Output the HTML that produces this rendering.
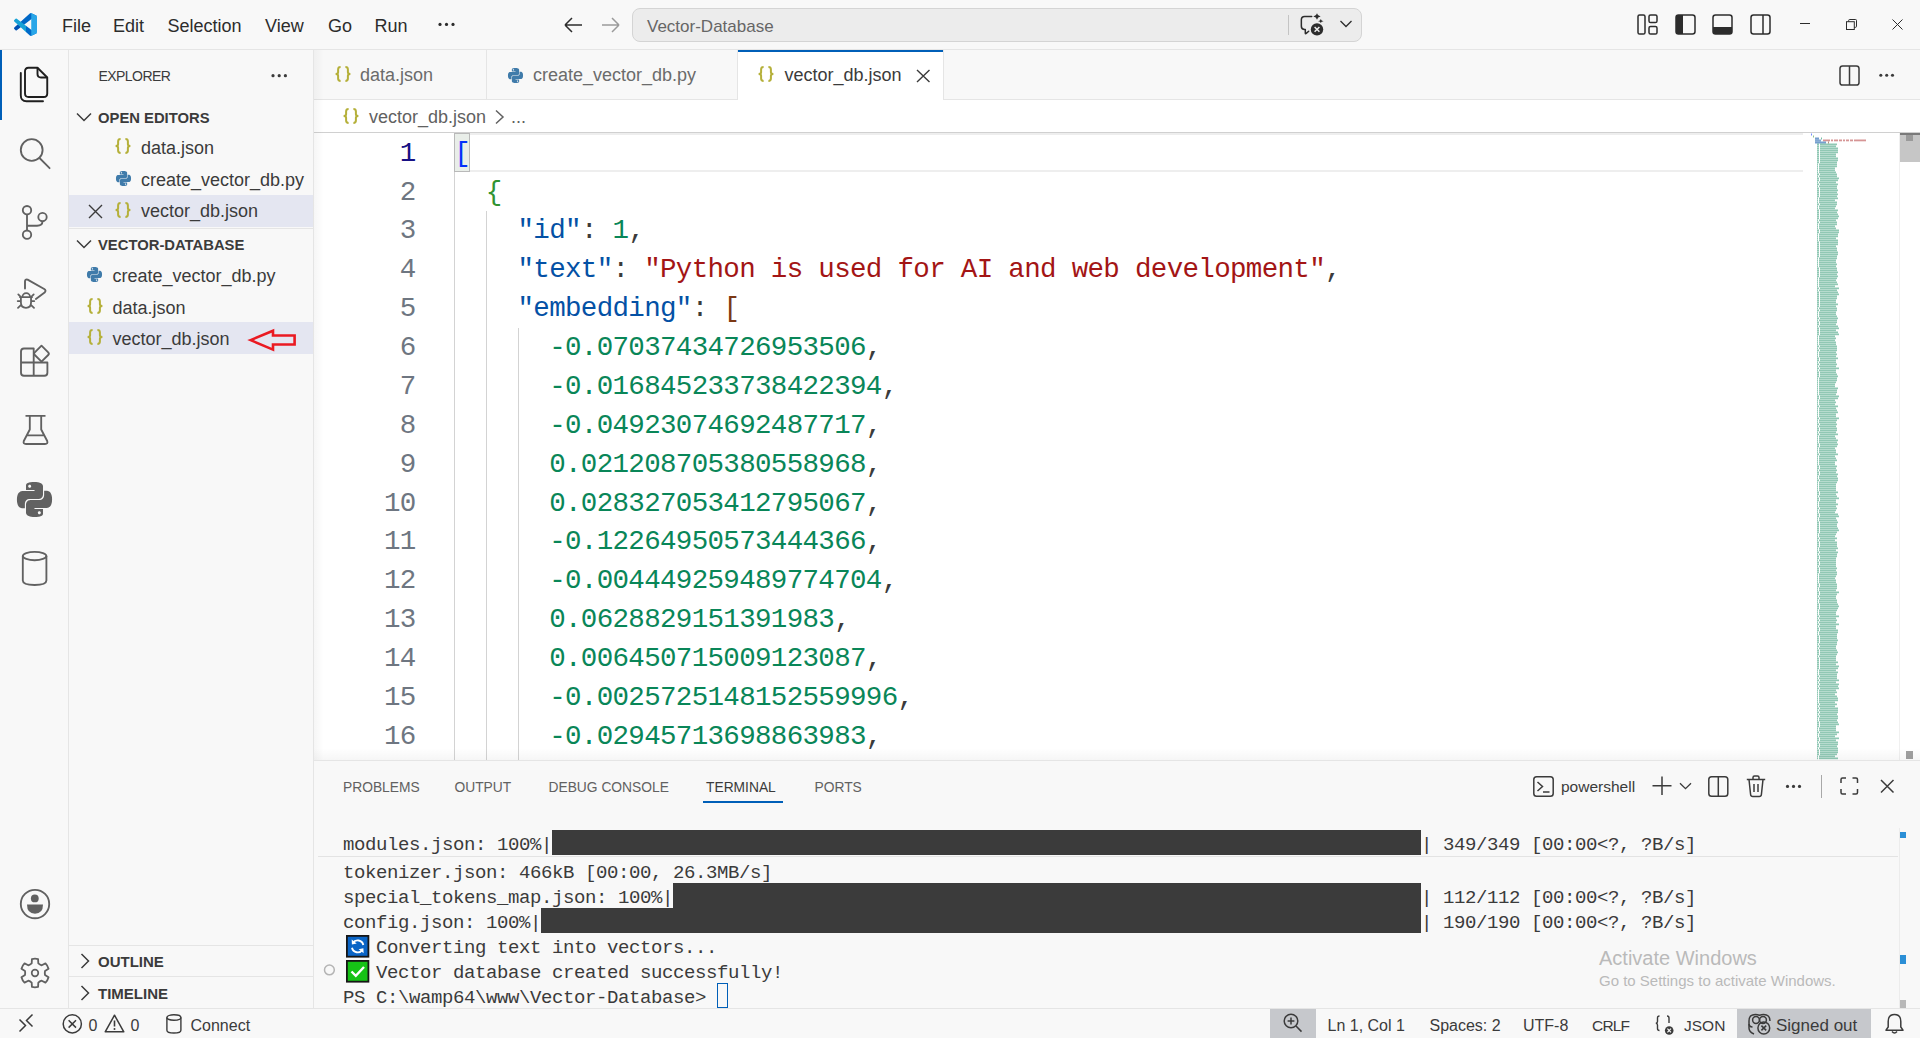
<!DOCTYPE html>
<html><head><meta charset="utf-8"><title>vector_db.json - Vector-Database - Visual Studio Code</title>
<style>
html,body{margin:0;padding:0;width:1920px;height:1038px;overflow:hidden;background:#f8f8f8;}
.r{position:absolute;}
.s{position:absolute;overflow:visible;}
.t{position:absolute;line-height:40px;height:40px;white-space:pre;font-family:"Liberation Sans",sans-serif;}
</style></head><body>
<div class="r" style="left:0px;top:0px;width:1920px;height:49px;background:#f8f8f8;"></div>
<div class="r" style="left:0px;top:49px;width:1920px;height:1px;background:#e5e5e5;"></div>
<div class="r" style="left:0px;top:50px;width:68px;height:958px;background:#f8f8f8;"></div>
<div class="r" style="left:68px;top:50px;width:1px;height:958px;background:#e5e5e5;"></div>
<div class="r" style="left:69px;top:50px;width:244px;height:958px;background:#f8f8f8;"></div>
<div class="r" style="left:313px;top:50px;width:1px;height:958px;background:#e5e5e5;"></div>
<div class="r" style="left:314px;top:50px;width:1606px;height:49px;background:#f8f8f8;"></div>
<div class="r" style="left:314px;top:99px;width:1606px;height:1px;background:#e5e5e5;"></div>
<div class="r" style="left:314px;top:100px;width:1606px;height:660px;background:#ffffff;"></div>
<div class="r" style="left:314px;top:760px;width:1606px;height:1px;background:#e5e5e5;"></div>
<div class="r" style="left:314px;top:761px;width:1606px;height:247px;background:#f8f8f8;"></div>
<div class="r" style="left:0px;top:1008px;width:1920px;height:1px;background:#e5e5e5;"></div>
<div class="r" style="left:0px;top:1009px;width:1920px;height:29px;background:#f8f8f8;"></div>
<svg class="s" style="left:14px;top:13px;" width="23" height="23" viewBox="0 0 100 100"><defs><linearGradient id="lg1" x1="0" y1="0" x2="100" y2="0" gradientUnits="userSpaceOnUse"><stop offset="0" stop-color="#0052b4"/><stop offset="0.3" stop-color="#0052b4"/><stop offset="0.31" stop-color="#0068c6"/><stop offset="1" stop-color="#0068c6"/></linearGradient><linearGradient id="lg2" x1="0" y1="0" x2="100" y2="0" gradientUnits="userSpaceOnUse"><stop offset="0" stop-color="#17a2d6"/><stop offset="0.5" stop-color="#17a2d6"/><stop offset="0.52" stop-color="#006ac8"/><stop offset="1" stop-color="#006ac8"/></linearGradient></defs><path fill="url(#lg1)" d="M96.46 10.8 75.86.87a6.23 6.23 0 0 0-7.1 1.2L1.33 63.58a4.16 4.16 0 0 0 0 6.16l5.52 5a4.16 4.16 0 0 0 5.31.24L93.4 13.42a4.13 4.13 0 0 1 6.6 3.3v-.24a6.25 6.25 0 0 0-3.54-5.63z"/><path fill="url(#lg2)" d="m96.46 89.2-20.6 9.93a6.23 6.23 0 0 1-7.1-1.2L1.33 36.42a4.16 4.16 0 0 1 0-6.16l5.52-5a4.16 4.16 0 0 1 5.310-.24l81.24 61.56a4.13 4.13 0 0 0 6.6-3.3v.24a6.25 6.25 0 0 1-3.54 5.63z"/><path fill="#29a6e8" d="M75.86 99.13a6.24 6.24 0 0 1-7.1-1.2c2.3 2.3 6.24.67 6.24-2.59V4.66c0-3.26-3.94-4.890-6.24-2.59a6.24 6.24 0 0 1 7.1-1.2l20.6 9.91A6.25 6.25 0 0 1 100 16.45v67.1a6.25 6.25 0 0 1-3.54 5.63z"/></svg>
<div class="t" style="left:62px;top:5.76px;font-size:18px;color:#2c2c2c;font-family:'Liberation Sans', sans-serif;">File</div>
<div class="t" style="left:113px;top:5.76px;font-size:18px;color:#2c2c2c;font-family:'Liberation Sans', sans-serif;">Edit</div>
<div class="t" style="left:167.5px;top:5.76px;font-size:18px;color:#2c2c2c;font-family:'Liberation Sans', sans-serif;">Selection</div>
<div class="t" style="left:265px;top:5.76px;font-size:18px;color:#2c2c2c;font-family:'Liberation Sans', sans-serif;">View</div>
<div class="t" style="left:328px;top:5.76px;font-size:18px;color:#2c2c2c;font-family:'Liberation Sans', sans-serif;">Go</div>
<div class="t" style="left:374.5px;top:5.76px;font-size:18px;color:#2c2c2c;font-family:'Liberation Sans', sans-serif;">Run</div>
<svg class="s" style="left:437px;top:20px;" width="20" height="8" viewBox="0 0 20 8"><circle cx="3" cy="4.4" r="1.6" fill="#2c2c2c"/><circle cx="9.5" cy="4.4" r="1.6" fill="#2c2c2c"/><circle cx="16" cy="4.4" r="1.6" fill="#2c2c2c"/></svg>
<svg class="s" style="left:562px;top:15px;" width="22" height="20" viewBox="0 0 22 20"><path d="M3 10 H20 M3 10 L10 3 M3 10 L10 17" stroke="#2c2c2c" stroke-width="1.5" fill="none"/></svg>
<svg class="s" style="left:600px;top:15px;" width="22" height="20" viewBox="0 0 22 20"><path d="M19 10 H2 M19 10 L12 3 M19 10 L12 17" stroke="#9a9a9a" stroke-width="1.5" fill="none"/></svg>
<div class="r" style="left:632px;top:8px;width:730px;height:34px;background:#ececec;border:1px solid #d4d4d4;box-sizing:border-box;border-radius:8px;"></div>
<div class="t" style="left:647px;top:7.11px;font-size:17px;color:#666666;font-family:'Liberation Sans', sans-serif;">Vector-Database</div>
<div class="r" style="left:1288px;top:15px;width:1px;height:20px;background:#c4c4c4;"></div>
<svg class="s" style="left:1296px;top:10px;" width="32" height="30" viewBox="0 0 32 30"><path d="M15.7 6.5 H8.6 Q5.35 6.5 5.35 9.8 V16.2 Q5.35 19.4 8.6 19.4 H9.3 V23.3 Q9.5 24 10.2 23.4 L12.7 21.2" stroke="#2c2c2c" stroke-width="1.5" fill="none" stroke-linejoin="round" stroke-linecap="round"/><path d="M21 3.2 Q21.6 5.9 24.6 6.5 Q21.6 7.1 21 9.7 Q20.4 7.1 17.3 6.5 Q20.4 5.9 21 3.2Z" fill="#2c2c2c"/><path d="M24.8 9.1 Q25.2 10.9 27.6 11.2 Q25.2 11.6 24.8 12.9 Q24.4 11.6 22.1 11.2 Q24.4 10.9 24.8 9.1Z" fill="#2c2c2c"/><circle cx="21" cy="19.4" r="6.2" fill="#2c2c2c"/><path d="M18.6 17 L23.4 21.8 M23.4 17 L18.6 21.8" stroke="#ececec" stroke-width="1.5"/></svg>
<svg class="s" style="left:1339px;top:19px;" width="14" height="10" viewBox="0 0 14 10"><path d="M1.5 2 L7 7.5 L12.5 2" stroke="#2c2c2c" stroke-width="1.3" fill="none"/></svg>
<svg class="s" style="left:1637px;top:14px;" width="22" height="21" viewBox="0 0 22 21"><rect x="1" y="1" width="7" height="19" rx="1.6" stroke="#2c2c2c" stroke-width="1.5" fill="none"/><rect x="12" y="1" width="8" height="7.5" rx="1.6" stroke="#2c2c2c" stroke-width="1.5" fill="none"/><rect x="12" y="12.5" width="8" height="7.5" rx="1.6" stroke="#2c2c2c" stroke-width="1.5" fill="none"/></svg>
<svg class="s" style="left:1675px;top:14px;" width="21" height="21" viewBox="0 0 21 21"><rect x="1" y="1" width="19" height="19" rx="2.5" stroke="#2c2c2c" stroke-width="1.5" fill="none"/><path d="M3.5 1 H8 V20 H3.5 Q1 20 1 17.5 V3.5 Q1 1 3.5 1Z" fill="#2c2c2c"/></svg>
<svg class="s" style="left:1712px;top:14px;" width="21" height="21" viewBox="0 0 21 21"><rect x="1" y="1" width="19" height="19" rx="2.5" stroke="#2c2c2c" stroke-width="1.5" fill="none"/><path d="M1 13 H20 V17.5 Q20 20 17.5 20 H3.5 Q1 20 1 17.5Z" fill="#2c2c2c"/></svg>
<svg class="s" style="left:1750px;top:14px;" width="21" height="21" viewBox="0 0 21 21"><rect x="1" y="1" width="19" height="19" rx="2.5" stroke="#2c2c2c" stroke-width="1.5" fill="none"/><path d="M13 1 V20" stroke="#2c2c2c" stroke-width="1.5"/></svg>
<div class="r" style="left:1800px;top:23px;width:10px;height:1px;background:#2c2c2c;"></div>
<svg class="s" style="left:1846px;top:19px;" width="11" height="11" viewBox="0 0 11 11"><rect x="0.5" y="2.7" width="7.8" height="7.8" stroke="#2c2c2c" stroke-width="1" fill="none"/><path d="M2.7 2.7 V1.4 Q2.7 0.5 3.6 0.5 H9.6 Q10.5 0.5 10.5 1.4 V7.4 Q10.5 8.3 9.6 8.3 H8.3" stroke="#2c2c2c" stroke-width="1" fill="none"/></svg>
<svg class="s" style="left:1891.5px;top:19px;" width="11" height="11" viewBox="0 0 11 11"><path d="M0.5 0.5 L10.5 10.5 M10.5 0.5 L0.5 10.5" stroke="#2c2c2c" stroke-width="1"/></svg>
<div class="r" style="left:0px;top:50px;width:2px;height:70px;background:#005fb8;"></div>
<svg class="s" style="left:20px;top:67px;" width="29" height="36" viewBox="0 0 29 36"><path d="M8.5 0.75 H17.5 L27.25 10.5 V26.5 Q27.25 30 23.75 30 H8.5 Q5 30 5 26.5 V4.25 Q5 0.75 8.5 0.75Z" stroke="#1f1f1f" stroke-width="1.9" fill="none" stroke-linejoin="round"/><path d="M17.5 0.75 V7 Q17.5 10.5 21 10.5 H27.25" stroke="#1f1f1f" stroke-width="1.9" fill="none"/><path d="M0.8 6 V28.5 Q0.8 34.2 6.5 34.2 H23" stroke="#1f1f1f" stroke-width="1.9" fill="none" stroke-linecap="round"/></svg>
<svg class="s" style="left:19px;top:137px;" width="33" height="33" viewBox="0 0 33 33"><circle cx="12.7" cy="13" r="10.9" stroke="#616161" stroke-width="1.85" fill="none"/><path d="M20.5 21 L30.6 31.2" stroke="#616161" stroke-width="1.8" stroke-linecap="round"/></svg>
<svg class="s" style="left:19px;top:204px;" width="32" height="37" viewBox="0 0 32 37"><circle cx="8" cy="6.2" r="4.2" stroke="#616161" stroke-width="1.85" fill="none"/><circle cx="8" cy="30.7" r="4.2" stroke="#616161" stroke-width="1.85" fill="none"/><circle cx="23.5" cy="13" r="4.2" stroke="#616161" stroke-width="1.85" fill="none"/><path d="M8 10.4 V26.5 M8 21.7 H18 Q23.5 21.7 23.5 17.2" stroke="#616161" stroke-width="1.85" fill="none"/></svg>
<svg class="s" style="left:10px;top:272px;" width="46" height="42" viewBox="0 0 46 42"><path d="M15 16.6 V9.6 Q15 7 17.6 7.6 L34.2 17 Q36.6 18.6 34.6 20.6 L25.9 26.9" stroke="#616161" stroke-width="1.9" fill="none" stroke-linejoin="round" stroke-linecap="round"/><path d="M12.4 25 A3.85 3.85 0 0 1 20.1 25" stroke="#616161" stroke-width="1.8" fill="none"/><path d="M9.9 25.1 H22.1 M10.9 25.1 V30.5 Q10.9 35.8 16 35.8 Q21.05 35.8 21.05 30.5 V25.1 M8.3 22.4 L10.9 25.1 M23.7 22.4 L21.05 25.1 M7.7 29.1 H10.9 M24.3 29.1 H21.05 M8 35.8 L11.4 32.6 M24 35.8 L20.6 32.6" stroke="#616161" stroke-width="1.8" fill="none" stroke-linecap="round"/></svg>
<svg class="s" style="left:19.5px;top:344.5px;overflow:visible;" width="31" height="30" viewBox="0 -2.5 31 30"><path d="M4 1 H13.7 V28.2 H4 Q1 28.2 1 25.2 V4 Q1 1 4 1Z M1 15 H27.4 V25.2 Q27.4 28.2 24.4 28.2 H13.7" stroke="#616161" stroke-width="1.85" fill="none" stroke-linejoin="round"/><path d="M21.5 -1.8 L28.2 4.9 Q29.5 6.2 28.2 7.5 L21.5 14.2 L14.8 7.5 Q13.5 6.2 14.8 4.9Z" stroke="#616161" stroke-width="1.85" fill="none" stroke-linejoin="round"/></svg>
<svg class="s" style="left:22.5px;top:414.5px;overflow:visible;" width="26" height="31" viewBox="0 0 26 31"><path d="M2.5 0.8 H22.5 M6.8 0.8 V14.5 L0.8 26 Q-0.2 29 3 29 H22 Q25.2 29 24.2 26 L18.2 14.5 V0.8 M3.6 20.3 H21.4" stroke="#616161" stroke-width="1.85" fill="none" stroke-linejoin="round"/></svg>
<svg class="s" style="left:17px;top:482px;" width="35" height="35" viewBox="0 0 24 24"><path d="M14.25.18l.9.2.73.26.59.3.45.32.34.34.25.34.16.33.1.3.04.26.02.2-.01.13V8.5l-.05.63-.13.55-.21.46-.26.38-.3.31-.33.25-.35.19-.35.14-.33.1-.3.07-.26.04-.21.02H8.77l-.69.05-.59.14-.5.22-.41.27-.33.32-.27.35-.2.36-.15.37-.1.35-.07.32-.04.27-.02.21v3.06H3.17l-.21-.03-.28-.07-.32-.12-.35-.18-.36-.26-.36-.36-.35-.46-.32-.59-.28-.73-.21-.88-.14-1.05-.05-1.23.06-1.22.16-1.04.24-.87.32-.71.36-.57.4-.44.42-.33.42-.24.4-.16.36-.1.32-.05.24-.01h.16l.06.01h8.16v-.83H6.18l-.01-2.75-.02-.37.05-.34.11-.31.17-.28.25-.26.31-.23.38-.2.44-.18.51-.15.58-.12.64-.1.71-.06.77-.04.84-.02 1.27.05zm-6.3 1.98l-.23.33-.08.41.08.41.23.34.33.22.41.09.41-.09.33-.22.23-.34.08-.41-.08-.41-.23-.33-.33-.22-.41-.09-.41.09zm13.09 3.95l.28.06.32.12.35.18.36.27.36.35.35.47.32.59.28.73.21.88.14 1.04.05 1.23-.06 1.23-.16 1.04-.24.86-.32.71-.36.57-.4.45-.42.33-.42.24-.4.16-.36.09-.32.05-.24.02-.16-.01h-8.22v.82h5.84l.01 2.76.02.36-.05.34-.11.31-.17.29-.25.25-.31.24-.38.2-.44.17-.51.15-.58.13-.64.09-.71.07-.77.04-.84.01-1.27-.04-1.07-.14-.9-.2-.73-.25-.59-.3-.45-.33-.34-.34-.25-.34-.16-.33-.1-.3-.04-.25-.02-.2.01-.13v-5.34l.05-.64.13-.54.21-.46.26-.38.3-.32.33-.24.35-.2.35-.14.33-.1.3-.06.26-.04.21-.02.13-.01h5.84l.69-.05.59-.14.5-.21.41-.28.33-.32.27-.35.2-.36.15-.36.1-.35.07-.32.04-.28.02-.21V6.07h2.09l.14.01zm-6.47 14.25l-.23.33-.08.41.08.41.23.33.33.23.41.08.41-.08.33-.23.23-.33.08-.41-.08-.41-.23-.33-.33-.23-.41-.08-.41.08z" fill="#616161"/></svg>
<svg class="s" style="left:22px;top:551px;" width="26" height="36" viewBox="0 0 26 36"><ellipse cx="12.6" cy="5" rx="11.8" ry="4.2" stroke="#616161" stroke-width="1.85" fill="none"/><path d="M0.8 5 V29.5 Q0.8 34 12.6 34 Q24.4 34 24.4 29.5 V5" stroke="#616161" stroke-width="1.85" fill="none"/></svg>
<svg class="s" style="left:20px;top:888.5px;" width="30" height="30" viewBox="0 0 30 30"><circle cx="15" cy="15" r="14.2" stroke="#616161" stroke-width="1.85" fill="none"/><circle cx="14.8" cy="9.4" r="3.9" fill="#616161"/><path d="M7 15.6 H23 Q23 24.8 15 24.8 Q7 24.8 7 15.6Z" fill="#616161"/></svg>
<svg class="s" style="left:20px;top:957.5px;" width="30" height="30" viewBox="0 0 30 30"><path d="M11.68 5.36 L11.93 1.14 Q15.00 0.30 18.07 1.14 L18.32 5.36 Q19.80 6.69 21.69 7.30 L25.47 5.41 Q27.73 7.65 28.54 10.73 L25.01 13.05 Q24.60 15.00 25.01 16.95 L28.54 19.27 Q27.73 22.35 25.47 24.59 L21.69 22.70 Q19.80 23.31 18.32 24.64 L18.07 28.86 Q15.00 29.70 11.93 28.86 L11.68 24.64 Q10.20 23.31 8.31 22.70 L4.53 24.59 Q2.27 22.35 1.46 19.27 L4.99 16.95 Q5.40 15.00 4.99 13.05 L1.46 10.73 Q2.27 7.65 4.53 5.41 L8.31 7.30 Q10.20 6.69 11.68 5.36 Z" stroke="#616161" stroke-width="1.8" fill="none" stroke-linejoin="round"/><circle cx="15" cy="15" r="3.3" stroke="#616161" stroke-width="1.7" fill="none"/></svg>
<div class="t" style="left:98.5px;top:56.45px;font-size:14px;color:#3b3b3b;font-family:'Liberation Sans', sans-serif;letter-spacing:-0.55px;">EXPLORER</div>
<svg class="s" style="left:271px;top:72px;" width="18" height="7" viewBox="0 0 18 7"><circle cx="2" cy="3.7" r="1.6" fill="#3b3b3b"/><circle cx="8.2" cy="3.7" r="1.6" fill="#3b3b3b"/><circle cx="14.4" cy="3.7" r="1.6" fill="#3b3b3b"/></svg>
<svg class="s" style="left:75.5px;top:111.5px;" width="16" height="10" viewBox="0 0 16 10"><path d="M1 1.5 L8 8.5 L15 1.5" stroke="#3b3b3b" stroke-width="1.5" fill="none"/></svg>
<div class="t" style="left:98px;top:97.67px;font-size:14.8px;color:#3b3b3b;font-weight:bold;font-family:'Liberation Sans', sans-serif;">OPEN EDITORS</div>
<svg class="s" style="left:115px;top:138.4px;" width="16" height="16" viewBox="0 0 16 16"><path d="M5.6 1 Q3.1 1 3.1 3.4 V6.2 Q3.1 8 0.6 8 Q3.1 8 3.1 9.8 V12.6 Q3.1 15 5.6 15" stroke="#b5b03a" stroke-width="2" fill="none"/><path d="M10.4 1 Q12.9 1 12.9 3.4 V6.2 Q12.9 8 15.4 8 Q12.9 8 12.9 9.8 V12.6 Q12.9 15 10.4 15" stroke="#b5b03a" stroke-width="2" fill="none"/></svg>
<div class="t" style="left:141px;top:128.26px;font-size:18px;color:#3b3b3b;font-family:'Liberation Sans', sans-serif;">data.json</div>
<svg class="s" style="left:116px;top:171px;" width="15" height="15" viewBox="0 0 24 24"><path d="M14.25.18l.9.2.73.26.59.3.45.32.34.34.25.34.16.33.1.3.04.26.02.2-.01.13V8.5l-.05.63-.13.55-.21.46-.26.38-.3.31-.33.25-.35.19-.35.14-.33.1-.3.07-.26.04-.21.02H8.77l-.69.05-.59.14-.5.22-.41.27-.33.32-.27.35-.2.36-.15.37-.1.35-.07.32-.04.27-.02.21v3.06H3.17l-.21-.03-.28-.07-.32-.12-.35-.18-.36-.26-.36-.36-.35-.46-.32-.59-.28-.73-.21-.88-.14-1.05-.05-1.23.06-1.22.16-1.04.24-.87.32-.71.36-.57.4-.44.42-.33.42-.24.4-.16.36-.1.32-.05.24-.01h.16l.06.01h8.16v-.83H6.18l-.01-2.75-.02-.37.05-.34.11-.31.17-.28.25-.26.31-.23.38-.2.44-.18.51-.15.58-.12.64-.1.71-.06.77-.04.84-.02 1.27.05zm-6.3 1.98l-.23.33-.08.41.08.41.23.34.33.22.41.09.41-.09.33-.22.23-.34.08-.41-.08-.41-.23-.33-.33-.22-.41-.09-.41.09zm13.09 3.95l.28.06.32.12.35.18.36.27.36.35.35.47.32.59.28.73.21.88.14 1.04.05 1.23-.06 1.23-.16 1.04-.24.86-.32.71-.36.57-.4.45-.42.33-.42.24-.4.16-.36.09-.32.05-.24.02-.16-.01h-8.22v.82h5.84l.01 2.76.02.36-.05.34-.11.31-.17.29-.25.25-.31.24-.38.2-.44.17-.51.15-.58.13-.64.09-.71.07-.77.04-.84.01-1.27-.04-1.07-.14-.9-.2-.73-.25-.59-.3-.45-.33-.34-.34-.25-.34-.16-.33-.1-.3-.04-.25-.02-.2.01-.13v-5.34l.05-.64.13-.54.21-.46.26-.38.3-.32.33-.24.35-.2.35-.14.33-.1.3-.06.26-.04.21-.02.13-.01h5.84l.69-.05.59-.14.5-.21.41-.28.33-.32.27-.35.2-.36.15-.36.1-.35.07-.32.04-.28.02-.21V6.07h2.09l.14.01zm-6.47 14.25l-.23.33-.08.41.08.41.23.33.33.23.41.08.41-.08.33-.23.23-.33.08-.41-.08-.41-.23-.33-.33-.23-.41-.08-.41.08z" fill="#3f7baa"/></svg>
<div class="t" style="left:141px;top:159.76px;font-size:18px;color:#3b3b3b;font-family:'Liberation Sans', sans-serif;">create_vector_db.py</div>
<div class="r" style="left:69px;top:195px;width:244px;height:32px;background:#e4e6f1;"></div>
<svg class="s" style="left:87.5px;top:203.5px;" width="15" height="15" viewBox="0 0 15 15"><path d="M1 1 L14 14 M14 1 L1 14" stroke="#3b3b3b" stroke-width="1.4"/></svg>
<svg class="s" style="left:115px;top:201.9px;" width="16" height="16" viewBox="0 0 16 16"><path d="M5.6 1 Q3.1 1 3.1 3.4 V6.2 Q3.1 8 0.6 8 Q3.1 8 3.1 9.8 V12.6 Q3.1 15 5.6 15" stroke="#b5b03a" stroke-width="2" fill="none"/><path d="M10.4 1 Q12.9 1 12.9 3.4 V6.2 Q12.9 8 15.4 8 Q12.9 8 12.9 9.8 V12.6 Q12.9 15 10.4 15" stroke="#b5b03a" stroke-width="2" fill="none"/></svg>
<div class="t" style="left:141px;top:191.06px;font-size:18px;color:#3b3b3b;font-family:'Liberation Sans', sans-serif;">vector_db.json</div>
<div class="r" style="left:69px;top:228px;width:244px;height:1px;background:#e5e5e5;"></div>
<svg class="s" style="left:75.5px;top:238.5px;" width="16" height="10" viewBox="0 0 16 10"><path d="M1 1.5 L8 8.5 L15 1.5" stroke="#3b3b3b" stroke-width="1.5" fill="none"/></svg>
<div class="t" style="left:98px;top:224.57px;font-size:14.8px;color:#3b3b3b;font-weight:bold;font-family:'Liberation Sans', sans-serif;">VECTOR-DATABASE</div>
<svg class="s" style="left:87px;top:266.5px;" width="15" height="15" viewBox="0 0 24 24"><path d="M14.25.18l.9.2.73.26.59.3.45.32.34.34.25.34.16.33.1.3.04.26.02.2-.01.13V8.5l-.05.63-.13.55-.21.46-.26.38-.3.31-.33.25-.35.19-.35.14-.33.1-.3.07-.26.04-.21.02H8.77l-.69.05-.59.14-.5.22-.41.27-.33.32-.27.35-.2.36-.15.37-.1.35-.07.32-.04.27-.02.21v3.06H3.17l-.21-.03-.28-.07-.32-.12-.35-.18-.36-.26-.36-.36-.35-.46-.32-.59-.28-.73-.21-.88-.14-1.05-.05-1.23.06-1.22.16-1.04.24-.87.32-.71.36-.57.4-.44.42-.33.42-.24.4-.16.36-.1.32-.05.24-.01h.16l.06.01h8.16v-.83H6.18l-.01-2.75-.02-.37.05-.34.11-.31.17-.28.25-.26.31-.23.38-.2.44-.18.51-.15.58-.12.64-.1.71-.06.77-.04.84-.02 1.27.05zm-6.3 1.98l-.23.33-.08.41.08.41.23.34.33.22.41.09.41-.09.33-.22.23-.34.08-.41-.08-.41-.23-.33-.33-.22-.41-.09-.41.09zm13.09 3.95l.28.06.32.12.35.18.36.27.36.35.35.47.32.59.28.73.21.88.14 1.04.05 1.23-.06 1.23-.16 1.04-.24.86-.32.71-.36.57-.4.45-.42.33-.42.24-.4.16-.36.09-.32.05-.24.02-.16-.01h-8.22v.82h5.84l.01 2.76.02.36-.05.34-.11.31-.17.29-.25.25-.31.24-.38.2-.44.17-.51.15-.58.13-.64.09-.71.07-.77.04-.84.01-1.27-.04-1.07-.14-.9-.2-.73-.25-.59-.3-.45-.33-.34-.34-.25-.34-.16-.33-.1-.3-.04-.25-.02-.2.01-.13v-5.34l.05-.64.13-.54.21-.46.26-.38.3-.32.33-.24.35-.2.35-.14.33-.1.3-.06.26-.04.21-.02.13-.01h5.84l.69-.05.59-.14.5-.21.41-.28.33-.32.27-.35.2-.36.15-.36.1-.35.07-.32.04-.28.02-.21V6.07h2.09l.14.01zm-6.47 14.25l-.23.33-.08.41.08.41.23.33.33.23.41.08.41-.08.33-.23.23-.33.08-.41-.08-.41-.23-.33-.33-.23-.41-.08-.41.08z" fill="#3f7baa"/></svg>
<div class="t" style="left:112.5px;top:255.66px;font-size:18px;color:#3b3b3b;font-family:'Liberation Sans', sans-serif;">create_vector_db.py</div>
<svg class="s" style="left:86.5px;top:297.9px;" width="16" height="16" viewBox="0 0 16 16"><path d="M5.6 1 Q3.1 1 3.1 3.4 V6.2 Q3.1 8 0.6 8 Q3.1 8 3.1 9.8 V12.6 Q3.1 15 5.6 15" stroke="#b5b03a" stroke-width="2" fill="none"/><path d="M10.4 1 Q12.9 1 12.9 3.4 V6.2 Q12.9 8 15.4 8 Q12.9 8 12.9 9.8 V12.6 Q12.9 15 10.4 15" stroke="#b5b03a" stroke-width="2" fill="none"/></svg>
<div class="t" style="left:112.5px;top:287.66px;font-size:18px;color:#3b3b3b;font-family:'Liberation Sans', sans-serif;">data.json</div>
<div class="r" style="left:69px;top:322px;width:244px;height:32px;background:#e4e6f1;"></div>
<svg class="s" style="left:86.5px;top:328.9px;" width="16" height="16" viewBox="0 0 16 16"><path d="M5.6 1 Q3.1 1 3.1 3.4 V6.2 Q3.1 8 0.6 8 Q3.1 8 3.1 9.8 V12.6 Q3.1 15 5.6 15" stroke="#b5b03a" stroke-width="2" fill="none"/><path d="M10.4 1 Q12.9 1 12.9 3.4 V6.2 Q12.9 8 15.4 8 Q12.9 8 12.9 9.8 V12.6 Q12.9 15 10.4 15" stroke="#b5b03a" stroke-width="2" fill="none"/></svg>
<div class="t" style="left:112.5px;top:318.56px;font-size:18px;color:#3b3b3b;font-family:'Liberation Sans', sans-serif;">vector_db.json</div>
<svg class="s" style="left:247px;top:327px;" width="52" height="27" viewBox="0 0 52 27"><path d="M3.6 13.1 L26 3.7 V8.5 H47.6 V17.5 H26 V22.6 Z" stroke="#ea1a22" stroke-width="2.6" fill="none" stroke-linejoin="miter"/></svg>
<div class="r" style="left:69px;top:945px;width:244px;height:1px;background:#e5e5e5;"></div>
<svg class="s" style="left:79.5px;top:953px;" width="10" height="16" viewBox="0 0 10 16"><path d="M1.5 1 L8.5 8 L1.5 15" stroke="#3b3b3b" stroke-width="1.5" fill="none"/></svg>
<div class="t" style="left:98px;top:941.90px;font-size:15px;color:#3b3b3b;font-weight:bold;font-family:'Liberation Sans', sans-serif;">OUTLINE</div>
<div class="r" style="left:69px;top:976px;width:244px;height:1px;background:#e5e5e5;"></div>
<svg class="s" style="left:79.5px;top:984.5px;" width="10" height="16" viewBox="0 0 10 16"><path d="M1.5 1 L8.5 8 L1.5 15" stroke="#3b3b3b" stroke-width="1.5" fill="none"/></svg>
<div class="t" style="left:98px;top:973.80px;font-size:15px;color:#3b3b3b;font-weight:bold;font-family:'Liberation Sans', sans-serif;">TIMELINE</div>
<div class="r" style="left:486px;top:50px;width:1px;height:49px;background:#e5e5e5;"></div>
<svg class="s" style="left:334.5px;top:66.4px;" width="16" height="16" viewBox="0 0 16 16"><path d="M5.6 1 Q3.1 1 3.1 3.4 V6.2 Q3.1 8 0.6 8 Q3.1 8 3.1 9.8 V12.6 Q3.1 15 5.6 15" stroke="#b5b03a" stroke-width="2" fill="none"/><path d="M10.4 1 Q12.9 1 12.9 3.4 V6.2 Q12.9 8 15.4 8 Q12.9 8 12.9 9.8 V12.6 Q12.9 15 10.4 15" stroke="#b5b03a" stroke-width="2" fill="none"/></svg>
<div class="t" style="left:360px;top:55.46px;font-size:18px;color:#6b6b6b;font-family:'Liberation Sans', sans-serif;">data.json</div>
<svg class="s" style="left:507.5px;top:67.5px;" width="15" height="15" viewBox="0 0 24 24"><path d="M14.25.18l.9.2.73.26.59.3.45.32.34.34.25.34.16.33.1.3.04.26.02.2-.01.13V8.5l-.05.63-.13.55-.21.46-.26.38-.3.31-.33.25-.35.19-.35.14-.33.1-.3.07-.26.04-.21.02H8.77l-.69.05-.59.14-.5.22-.41.27-.33.32-.27.35-.2.36-.15.37-.1.35-.07.32-.04.27-.02.21v3.06H3.17l-.21-.03-.28-.07-.32-.12-.35-.18-.36-.26-.36-.36-.35-.46-.32-.59-.28-.73-.21-.88-.14-1.05-.05-1.23.06-1.22.16-1.04.24-.87.32-.71.36-.57.4-.44.42-.33.42-.24.4-.16.36-.1.32-.05.24-.01h.16l.06.01h8.16v-.83H6.18l-.01-2.75-.02-.37.05-.34.11-.31.17-.28.25-.26.31-.23.38-.2.44-.18.51-.15.58-.12.64-.1.71-.06.77-.04.84-.02 1.27.05zm-6.3 1.98l-.23.33-.08.41.08.41.23.34.33.22.41.09.41-.09.33-.22.23-.34.08-.41-.08-.41-.23-.33-.33-.22-.41-.09-.41.09zm13.09 3.95l.28.06.32.12.35.18.36.27.36.35.35.47.32.59.28.73.21.88.14 1.04.05 1.23-.06 1.23-.16 1.04-.24.86-.32.71-.36.57-.4.45-.42.33-.42.24-.4.16-.36.09-.32.05-.24.02-.16-.01h-8.22v.82h5.84l.01 2.76.02.36-.05.34-.11.31-.17.29-.25.25-.31.24-.38.2-.44.17-.51.15-.58.13-.64.09-.71.07-.77.04-.84.01-1.27-.04-1.07-.14-.9-.2-.73-.25-.59-.3-.45-.33-.34-.34-.25-.34-.16-.33-.1-.3-.04-.25-.02-.2.01-.13v-5.34l.05-.64.13-.54.21-.46.26-.38.3-.32.33-.24.35-.2.35-.14.33-.1.3-.06.26-.04.21-.02.13-.01h5.84l.69-.05.59-.14.5-.21.41-.28.33-.32.27-.35.2-.36.15-.36.1-.35.07-.32.04-.28.02-.21V6.07h2.09l.14.01zm-6.47 14.25l-.23.33-.08.41.08.41.23.33.33.23.41.08.41-.08.33-.23.23-.33.08-.41-.08-.41-.23-.33-.33-.23-.41-.08-.41.08z" fill="#3f7baa"/></svg>
<div class="t" style="left:533px;top:55.46px;font-size:18px;color:#6b6b6b;font-family:'Liberation Sans', sans-serif;">create_vector_db.py</div>
<div class="r" style="left:737px;top:50px;width:1px;height:50px;background:#e5e5e5;"></div>
<div class="r" style="left:738px;top:50px;width:205px;height:50px;background:#ffffff;"></div>
<div class="r" style="left:738px;top:50px;width:205px;height:2px;background:#005fb8;"></div>
<div class="r" style="left:943px;top:50px;width:1px;height:49px;background:#e5e5e5;"></div>
<svg class="s" style="left:758px;top:66.4px;" width="16" height="16" viewBox="0 0 16 16"><path d="M5.6 1 Q3.1 1 3.1 3.4 V6.2 Q3.1 8 0.6 8 Q3.1 8 3.1 9.8 V12.6 Q3.1 15 5.6 15" stroke="#b5b03a" stroke-width="2" fill="none"/><path d="M10.4 1 Q12.9 1 12.9 3.4 V6.2 Q12.9 8 15.4 8 Q12.9 8 12.9 9.8 V12.6 Q12.9 15 10.4 15" stroke="#b5b03a" stroke-width="2" fill="none"/></svg>
<div class="t" style="left:784.5px;top:55.46px;font-size:18px;color:#3b3b3b;font-family:'Liberation Sans', sans-serif;">vector_db.json</div>
<svg class="s" style="left:916px;top:68.5px;" width="14.5" height="14" viewBox="0 0 14.5 14"><path d="M1 1 L13.5 13 M13.5 1 L1 13" stroke="#3b3b3b" stroke-width="1.4"/></svg>
<svg class="s" style="left:1838.6px;top:65px;" width="21" height="21" viewBox="0 0 21 21"><rect x="1" y="1" width="19" height="19" rx="2.6" stroke="#3b3b3b" stroke-width="1.5" fill="none"/><path d="M10.5 1 V20" stroke="#3b3b3b" stroke-width="1.5"/></svg>
<svg class="s" style="left:1877px;top:72px;" width="18" height="7" viewBox="0 0 18 7"><circle cx="3.8" cy="3.3" r="1.55" fill="#3b3b3b"/><circle cx="9.7" cy="3.3" r="1.55" fill="#3b3b3b"/><circle cx="15.5" cy="3.3" r="1.55" fill="#3b3b3b"/></svg>
<svg class="s" style="left:343px;top:108.4px;" width="16" height="16" viewBox="0 0 16 16"><path d="M5.6 1 Q3.1 1 3.1 3.4 V6.2 Q3.1 8 0.6 8 Q3.1 8 3.1 9.8 V12.6 Q3.1 15 5.6 15" stroke="#b5b03a" stroke-width="2" fill="none"/><path d="M10.4 1 Q12.9 1 12.9 3.4 V6.2 Q12.9 8 15.4 8 Q12.9 8 12.9 9.8 V12.6 Q12.9 15 10.4 15" stroke="#b5b03a" stroke-width="2" fill="none"/></svg>
<div class="t" style="left:369px;top:97.06px;font-size:18px;color:#616161;font-family:'Liberation Sans', sans-serif;">vector_db.json</div>
<svg class="s" style="left:494px;top:109px;" width="12" height="16" viewBox="0 0 12 16"><path d="M2 1.5 L9 8 L2 14.5" stroke="#616161" stroke-width="1.5" fill="none"/></svg>
<div class="t" style="left:511px;top:97.06px;font-size:18px;color:#616161;font-family:'Liberation Sans', sans-serif;">...</div>
<div class="r" style="left:314px;top:132px;width:1606px;height:1px;background:#d0d0d0;"></div>
<div class="r" style="left:455px;top:133px;width:1348px;height:2px;background:#eeeeee;"></div>
<div class="r" style="left:455px;top:170px;width:1348px;height:2px;background:#eeeeee;"></div>
<div class="r" style="left:454px;top:133px;width:16px;height:38.5px;background:#e9eee9;border:1px solid #b9b9b9;box-sizing:border-box;"></div>
<div class="r" style="left:454px;top:172px;width:1px;height:588px;background:#d3d3d3;"></div>
<div class="r" style="left:486px;top:211px;width:1px;height:549px;background:#d3d3d3;"></div>
<div class="r" style="left:518px;top:328px;width:1px;height:432px;background:#d3d3d3;"></div>
<div class="t" style="left:316px;width:99.6px;text-align:right;top:133.67px;font-size:27.5px;color:#171184;font-family:'Liberation Mono',monospace;letter-spacing:-0.670px">1</div>
<div class="t" style="left:454.2px;top:133.67px;font-size:27.5px;font-family:'Liberation Mono',monospace;letter-spacing:-0.670px;white-space:pre"><span style="color:#0431fa">[</span></div>
<div class="t" style="left:316px;width:99.6px;text-align:right;top:172.55px;font-size:27.5px;color:#6e7681;font-family:'Liberation Mono',monospace;letter-spacing:-0.670px">2</div>
<div class="t" style="left:454.2px;top:172.55px;font-size:27.5px;font-family:'Liberation Mono',monospace;letter-spacing:-0.670px;white-space:pre">  <span style="color:#319331">{</span></div>
<div class="t" style="left:316px;width:99.6px;text-align:right;top:211.43px;font-size:27.5px;color:#6e7681;font-family:'Liberation Mono',monospace;letter-spacing:-0.670px">3</div>
<div class="t" style="left:454.2px;top:211.43px;font-size:27.5px;font-family:'Liberation Mono',monospace;letter-spacing:-0.670px;white-space:pre">    <span style="color:#0451a5">"id"</span><span style="color:#3b3b3b">: </span><span style="color:#098658">1</span><span style="color:#3b3b3b">,</span></div>
<div class="t" style="left:316px;width:99.6px;text-align:right;top:250.31px;font-size:27.5px;color:#6e7681;font-family:'Liberation Mono',monospace;letter-spacing:-0.670px">4</div>
<div class="t" style="left:454.2px;top:250.31px;font-size:27.5px;font-family:'Liberation Mono',monospace;letter-spacing:-0.670px;white-space:pre">    <span style="color:#0451a5">"text"</span><span style="color:#3b3b3b">: </span><span style="color:#a31515">"Python is used for AI and web development"</span><span style="color:#3b3b3b">,</span></div>
<div class="t" style="left:316px;width:99.6px;text-align:right;top:289.19px;font-size:27.5px;color:#6e7681;font-family:'Liberation Mono',monospace;letter-spacing:-0.670px">5</div>
<div class="t" style="left:454.2px;top:289.19px;font-size:27.5px;font-family:'Liberation Mono',monospace;letter-spacing:-0.670px;white-space:pre">    <span style="color:#0451a5">"embedding"</span><span style="color:#3b3b3b">: </span><span style="color:#7b3814">[</span></div>
<div class="t" style="left:316px;width:99.6px;text-align:right;top:328.07px;font-size:27.5px;color:#6e7681;font-family:'Liberation Mono',monospace;letter-spacing:-0.670px">6</div>
<div class="t" style="left:454.2px;top:328.07px;font-size:27.5px;font-family:'Liberation Mono',monospace;letter-spacing:-0.670px;white-space:pre">      <span style="color:#098658">-0.07037434726953506</span><span style="color:#3b3b3b">,</span></div>
<div class="t" style="left:316px;width:99.6px;text-align:right;top:366.95px;font-size:27.5px;color:#6e7681;font-family:'Liberation Mono',monospace;letter-spacing:-0.670px">7</div>
<div class="t" style="left:454.2px;top:366.95px;font-size:27.5px;font-family:'Liberation Mono',monospace;letter-spacing:-0.670px;white-space:pre">      <span style="color:#098658">-0.016845233738422394</span><span style="color:#3b3b3b">,</span></div>
<div class="t" style="left:316px;width:99.6px;text-align:right;top:405.83px;font-size:27.5px;color:#6e7681;font-family:'Liberation Mono',monospace;letter-spacing:-0.670px">8</div>
<div class="t" style="left:454.2px;top:405.83px;font-size:27.5px;font-family:'Liberation Mono',monospace;letter-spacing:-0.670px;white-space:pre">      <span style="color:#098658">-0.04923074692487717</span><span style="color:#3b3b3b">,</span></div>
<div class="t" style="left:316px;width:99.6px;text-align:right;top:444.71px;font-size:27.5px;color:#6e7681;font-family:'Liberation Mono',monospace;letter-spacing:-0.670px">9</div>
<div class="t" style="left:454.2px;top:444.71px;font-size:27.5px;font-family:'Liberation Mono',monospace;letter-spacing:-0.670px;white-space:pre">      <span style="color:#098658">0.021208705380558968</span><span style="color:#3b3b3b">,</span></div>
<div class="t" style="left:316px;width:99.6px;text-align:right;top:483.59px;font-size:27.5px;color:#6e7681;font-family:'Liberation Mono',monospace;letter-spacing:-0.670px">10</div>
<div class="t" style="left:454.2px;top:483.59px;font-size:27.5px;font-family:'Liberation Mono',monospace;letter-spacing:-0.670px;white-space:pre">      <span style="color:#098658">0.028327053412795067</span><span style="color:#3b3b3b">,</span></div>
<div class="t" style="left:316px;width:99.6px;text-align:right;top:522.47px;font-size:27.5px;color:#6e7681;font-family:'Liberation Mono',monospace;letter-spacing:-0.670px">11</div>
<div class="t" style="left:454.2px;top:522.47px;font-size:27.5px;font-family:'Liberation Mono',monospace;letter-spacing:-0.670px;white-space:pre">      <span style="color:#098658">-0.12264950573444366</span><span style="color:#3b3b3b">,</span></div>
<div class="t" style="left:316px;width:99.6px;text-align:right;top:561.35px;font-size:27.5px;color:#6e7681;font-family:'Liberation Mono',monospace;letter-spacing:-0.670px">12</div>
<div class="t" style="left:454.2px;top:561.35px;font-size:27.5px;font-family:'Liberation Mono',monospace;letter-spacing:-0.670px;white-space:pre">      <span style="color:#098658">-0.004449259489774704</span><span style="color:#3b3b3b">,</span></div>
<div class="t" style="left:316px;width:99.6px;text-align:right;top:600.23px;font-size:27.5px;color:#6e7681;font-family:'Liberation Mono',monospace;letter-spacing:-0.670px">13</div>
<div class="t" style="left:454.2px;top:600.23px;font-size:27.5px;font-family:'Liberation Mono',monospace;letter-spacing:-0.670px;white-space:pre">      <span style="color:#098658">0.0628829151391983</span><span style="color:#3b3b3b">,</span></div>
<div class="t" style="left:316px;width:99.6px;text-align:right;top:639.11px;font-size:27.5px;color:#6e7681;font-family:'Liberation Mono',monospace;letter-spacing:-0.670px">14</div>
<div class="t" style="left:454.2px;top:639.11px;font-size:27.5px;font-family:'Liberation Mono',monospace;letter-spacing:-0.670px;white-space:pre">      <span style="color:#098658">0.006450715009123087</span><span style="color:#3b3b3b">,</span></div>
<div class="t" style="left:316px;width:99.6px;text-align:right;top:677.99px;font-size:27.5px;color:#6e7681;font-family:'Liberation Mono',monospace;letter-spacing:-0.670px">15</div>
<div class="t" style="left:454.2px;top:677.99px;font-size:27.5px;font-family:'Liberation Mono',monospace;letter-spacing:-0.670px;white-space:pre">      <span style="color:#098658">-0.0025725148152559996</span><span style="color:#3b3b3b">,</span></div>
<div class="t" style="left:316px;width:99.6px;text-align:right;top:716.87px;font-size:27.5px;color:#6e7681;font-family:'Liberation Mono',monospace;letter-spacing:-0.670px">16</div>
<div class="t" style="left:454.2px;top:716.87px;font-size:27.5px;font-family:'Liberation Mono',monospace;letter-spacing:-0.670px;white-space:pre">      <span style="color:#098658">-0.02945713698863983</span><span style="color:#3b3b3b">,</span></div>
<svg class="s" style="left:1811px;top:133px;" width="88" height="627" viewBox="0 0 88 627"><rect x="0" y="0.5" width="1" height="2" fill="#0431fa" opacity="0.55"/><rect x="2" y="2.5" width="1" height="2" fill="#319331" opacity="0.55"/><rect x="4" y="4.5" width="4" height="2" fill="#0451a5" opacity="0.55"/><rect x="10" y="4.5" width="1" height="2" fill="#098658" opacity="0.55"/><rect x="4" y="6.5" width="6" height="2" fill="#0451a5" opacity="0.5"/><rect x="12" y="6.5" width="7" height="1.8" fill="#a31515" opacity="0.45"/><rect x="20" y="6.5" width="2" height="1.8" fill="#a31515" opacity="0.45"/><rect x="23" y="6.5" width="4" height="1.8" fill="#a31515" opacity="0.45"/><rect x="28" y="6.5" width="3" height="1.8" fill="#a31515" opacity="0.45"/><rect x="32" y="6.5" width="2" height="1.8" fill="#a31515" opacity="0.45"/><rect x="35" y="6.5" width="3" height="1.8" fill="#a31515" opacity="0.45"/><rect x="39" y="6.5" width="3" height="1.8" fill="#a31515" opacity="0.45"/><rect x="43" y="6.5" width="12" height="1.8" fill="#a31515" opacity="0.45"/><rect x="4" y="8.5" width="11" height="2" fill="#0451a5" opacity="0.55"/><rect x="17" y="8.5" width="1" height="2" fill="#7b3814" opacity="0.55"/><rect x="6" y="10.5" width="2" height="1.7" fill="#098658" opacity="0.45"/><rect x="9" y="10.5" width="17" height="1.7" fill="#098658" opacity="0.45"/><rect x="6" y="12.5" width="2" height="1.7" fill="#098658" opacity="0.45"/><rect x="9" y="12.5" width="16" height="1.7" fill="#098658" opacity="0.45"/><rect x="6" y="14.5" width="2" height="1.7" fill="#098658" opacity="0.45"/><rect x="9" y="14.5" width="18" height="1.7" fill="#098658" opacity="0.45"/><rect x="6" y="16.5" width="2" height="1.7" fill="#098658" opacity="0.45"/><rect x="9" y="16.5" width="18" height="1.7" fill="#098658" opacity="0.45"/><rect x="6" y="18.5" width="2" height="1.7" fill="#098658" opacity="0.45"/><rect x="9" y="18.5" width="18" height="1.7" fill="#098658" opacity="0.45"/><rect x="6" y="20.5" width="2" height="1.7" fill="#098658" opacity="0.45"/><rect x="9" y="20.5" width="16" height="1.7" fill="#098658" opacity="0.45"/><rect x="6" y="22.5" width="2" height="1.7" fill="#098658" opacity="0.45"/><rect x="9" y="22.5" width="16" height="1.7" fill="#098658" opacity="0.45"/><rect x="6" y="24.5" width="2" height="1.7" fill="#098658" opacity="0.45"/><rect x="9" y="24.5" width="18" height="1.7" fill="#098658" opacity="0.45"/><rect x="6" y="26.5" width="2" height="1.7" fill="#098658" opacity="0.45"/><rect x="9" y="26.5" width="18" height="1.7" fill="#098658" opacity="0.45"/><rect x="6" y="28.5" width="2" height="1.7" fill="#098658" opacity="0.45"/><rect x="9" y="28.5" width="17" height="1.7" fill="#098658" opacity="0.45"/><rect x="6" y="30.5" width="1" height="1.7" fill="#098658" opacity="0.45"/><rect x="8" y="30.5" width="18" height="1.7" fill="#098658" opacity="0.45"/><rect x="6" y="32.5" width="1" height="1.7" fill="#098658" opacity="0.45"/><rect x="8" y="32.5" width="18" height="1.7" fill="#098658" opacity="0.45"/><rect x="6" y="34.5" width="1" height="1.7" fill="#098658" opacity="0.45"/><rect x="8" y="34.5" width="16" height="1.7" fill="#098658" opacity="0.45"/><rect x="6" y="36.5" width="1" height="1.7" fill="#098658" opacity="0.45"/><rect x="8" y="36.5" width="16" height="1.7" fill="#098658" opacity="0.45"/><rect x="6" y="38.5" width="1" height="1.7" fill="#098658" opacity="0.45"/><rect x="8" y="38.5" width="17" height="1.7" fill="#098658" opacity="0.45"/><rect x="6" y="40.5" width="2" height="1.7" fill="#098658" opacity="0.45"/><rect x="9" y="40.5" width="17" height="1.7" fill="#098658" opacity="0.45"/><rect x="6" y="42.5" width="1" height="1.7" fill="#098658" opacity="0.45"/><rect x="8" y="42.5" width="18" height="1.7" fill="#098658" opacity="0.45"/><rect x="6" y="44.5" width="2" height="1.7" fill="#098658" opacity="0.45"/><rect x="9" y="44.5" width="19" height="1.7" fill="#098658" opacity="0.45"/><rect x="6" y="46.5" width="2" height="1.7" fill="#098658" opacity="0.45"/><rect x="9" y="46.5" width="18" height="1.7" fill="#098658" opacity="0.45"/><rect x="6" y="48.5" width="1" height="1.7" fill="#098658" opacity="0.45"/><rect x="8" y="48.5" width="17" height="1.7" fill="#098658" opacity="0.45"/><rect x="6" y="50.5" width="2" height="1.7" fill="#098658" opacity="0.45"/><rect x="9" y="50.5" width="18" height="1.7" fill="#098658" opacity="0.45"/><rect x="6" y="52.5" width="1" height="1.7" fill="#098658" opacity="0.45"/><rect x="8" y="52.5" width="18" height="1.7" fill="#098658" opacity="0.45"/><rect x="6" y="54.5" width="2" height="1.7" fill="#098658" opacity="0.45"/><rect x="9" y="54.5" width="17" height="1.7" fill="#098658" opacity="0.45"/><rect x="6" y="56.5" width="2" height="1.7" fill="#098658" opacity="0.45"/><rect x="9" y="56.5" width="18" height="1.7" fill="#098658" opacity="0.45"/><rect x="6" y="58.5" width="2" height="1.7" fill="#098658" opacity="0.45"/><rect x="9" y="58.5" width="17" height="1.7" fill="#098658" opacity="0.45"/><rect x="6" y="60.5" width="2" height="1.7" fill="#098658" opacity="0.45"/><rect x="9" y="60.5" width="18" height="1.7" fill="#098658" opacity="0.45"/><rect x="6" y="62.5" width="2" height="1.7" fill="#098658" opacity="0.45"/><rect x="9" y="62.5" width="17" height="1.7" fill="#098658" opacity="0.45"/><rect x="6" y="64.5" width="1" height="1.7" fill="#098658" opacity="0.45"/><rect x="8" y="64.5" width="19" height="1.7" fill="#098658" opacity="0.45"/><rect x="6" y="66.5" width="1" height="1.7" fill="#098658" opacity="0.45"/><rect x="8" y="66.5" width="16" height="1.7" fill="#098658" opacity="0.45"/><rect x="6" y="68.5" width="1" height="1.7" fill="#098658" opacity="0.45"/><rect x="8" y="68.5" width="18" height="1.7" fill="#098658" opacity="0.45"/><rect x="6" y="70.5" width="2" height="1.7" fill="#098658" opacity="0.45"/><rect x="9" y="70.5" width="17" height="1.7" fill="#098658" opacity="0.45"/><rect x="6" y="72.5" width="1" height="1.7" fill="#098658" opacity="0.45"/><rect x="8" y="72.5" width="17" height="1.7" fill="#098658" opacity="0.45"/><rect x="6" y="74.5" width="1" height="1.7" fill="#098658" opacity="0.45"/><rect x="8" y="74.5" width="16" height="1.7" fill="#098658" opacity="0.45"/><rect x="6" y="76.5" width="2" height="1.7" fill="#098658" opacity="0.45"/><rect x="9" y="76.5" width="18" height="1.7" fill="#098658" opacity="0.45"/><rect x="6" y="78.5" width="2" height="1.7" fill="#098658" opacity="0.45"/><rect x="9" y="78.5" width="17" height="1.7" fill="#098658" opacity="0.45"/><rect x="6" y="80.5" width="2" height="1.7" fill="#098658" opacity="0.45"/><rect x="9" y="80.5" width="18" height="1.7" fill="#098658" opacity="0.45"/><rect x="6" y="82.5" width="2" height="1.7" fill="#098658" opacity="0.45"/><rect x="9" y="82.5" width="19" height="1.7" fill="#098658" opacity="0.45"/><rect x="6" y="84.5" width="2" height="1.7" fill="#098658" opacity="0.45"/><rect x="9" y="84.5" width="18" height="1.7" fill="#098658" opacity="0.45"/><rect x="6" y="86.5" width="1" height="1.7" fill="#098658" opacity="0.45"/><rect x="8" y="86.5" width="17" height="1.7" fill="#098658" opacity="0.45"/><rect x="6" y="88.5" width="2" height="1.7" fill="#098658" opacity="0.45"/><rect x="9" y="88.5" width="17" height="1.7" fill="#098658" opacity="0.45"/><rect x="6" y="90.5" width="1" height="1.7" fill="#098658" opacity="0.45"/><rect x="8" y="90.5" width="18" height="1.7" fill="#098658" opacity="0.45"/><rect x="6" y="92.5" width="1" height="1.7" fill="#098658" opacity="0.45"/><rect x="8" y="92.5" width="16" height="1.7" fill="#098658" opacity="0.45"/><rect x="6" y="94.5" width="1" height="1.7" fill="#098658" opacity="0.45"/><rect x="8" y="94.5" width="17" height="1.7" fill="#098658" opacity="0.45"/><rect x="6" y="96.5" width="2" height="1.7" fill="#098658" opacity="0.45"/><rect x="9" y="96.5" width="19" height="1.7" fill="#098658" opacity="0.45"/><rect x="6" y="98.5" width="2" height="1.7" fill="#098658" opacity="0.45"/><rect x="9" y="98.5" width="19" height="1.7" fill="#098658" opacity="0.45"/><rect x="6" y="100.5" width="1" height="1.7" fill="#098658" opacity="0.45"/><rect x="8" y="100.5" width="19" height="1.7" fill="#098658" opacity="0.45"/><rect x="6" y="102.5" width="1" height="1.7" fill="#098658" opacity="0.45"/><rect x="8" y="102.5" width="19" height="1.7" fill="#098658" opacity="0.45"/><rect x="6" y="104.5" width="1" height="1.7" fill="#098658" opacity="0.45"/><rect x="8" y="104.5" width="17" height="1.7" fill="#098658" opacity="0.45"/><rect x="6" y="106.5" width="1" height="1.7" fill="#098658" opacity="0.45"/><rect x="8" y="106.5" width="19" height="1.7" fill="#098658" opacity="0.45"/><rect x="6" y="108.5" width="2" height="1.7" fill="#098658" opacity="0.45"/><rect x="9" y="108.5" width="18" height="1.7" fill="#098658" opacity="0.45"/><rect x="6" y="110.5" width="2" height="1.7" fill="#098658" opacity="0.45"/><rect x="9" y="110.5" width="18" height="1.7" fill="#098658" opacity="0.45"/><rect x="6" y="112.5" width="2" height="1.7" fill="#098658" opacity="0.45"/><rect x="9" y="112.5" width="16" height="1.7" fill="#098658" opacity="0.45"/><rect x="6" y="114.5" width="2" height="1.7" fill="#098658" opacity="0.45"/><rect x="9" y="114.5" width="17" height="1.7" fill="#098658" opacity="0.45"/><rect x="6" y="116.5" width="2" height="1.7" fill="#098658" opacity="0.45"/><rect x="9" y="116.5" width="17" height="1.7" fill="#098658" opacity="0.45"/><rect x="6" y="118.5" width="2" height="1.7" fill="#098658" opacity="0.45"/><rect x="9" y="118.5" width="18" height="1.7" fill="#098658" opacity="0.45"/><rect x="6" y="120.5" width="2" height="1.7" fill="#098658" opacity="0.45"/><rect x="9" y="120.5" width="18" height="1.7" fill="#098658" opacity="0.45"/><rect x="6" y="122.5" width="2" height="1.7" fill="#098658" opacity="0.45"/><rect x="9" y="122.5" width="17" height="1.7" fill="#098658" opacity="0.45"/><rect x="6" y="124.5" width="1" height="1.7" fill="#098658" opacity="0.45"/><rect x="8" y="124.5" width="18" height="1.7" fill="#098658" opacity="0.45"/><rect x="6" y="126.5" width="1" height="1.7" fill="#098658" opacity="0.45"/><rect x="8" y="126.5" width="17" height="1.7" fill="#098658" opacity="0.45"/><rect x="6" y="128.5" width="1" height="1.7" fill="#098658" opacity="0.45"/><rect x="8" y="128.5" width="17" height="1.7" fill="#098658" opacity="0.45"/><rect x="6" y="130.5" width="1" height="1.7" fill="#098658" opacity="0.45"/><rect x="8" y="130.5" width="18" height="1.7" fill="#098658" opacity="0.45"/><rect x="6" y="132.5" width="1" height="1.7" fill="#098658" opacity="0.45"/><rect x="8" y="132.5" width="17" height="1.7" fill="#098658" opacity="0.45"/><rect x="6" y="134.5" width="2" height="1.7" fill="#098658" opacity="0.45"/><rect x="9" y="134.5" width="17" height="1.7" fill="#098658" opacity="0.45"/><rect x="6" y="136.5" width="2" height="1.7" fill="#098658" opacity="0.45"/><rect x="9" y="136.5" width="17" height="1.7" fill="#098658" opacity="0.45"/><rect x="6" y="138.5" width="2" height="1.7" fill="#098658" opacity="0.45"/><rect x="9" y="138.5" width="18" height="1.7" fill="#098658" opacity="0.45"/><rect x="6" y="140.5" width="2" height="1.7" fill="#098658" opacity="0.45"/><rect x="9" y="140.5" width="17" height="1.7" fill="#098658" opacity="0.45"/><rect x="6" y="142.5" width="2" height="1.7" fill="#098658" opacity="0.45"/><rect x="9" y="142.5" width="18" height="1.7" fill="#098658" opacity="0.45"/><rect x="6" y="144.5" width="1" height="1.7" fill="#098658" opacity="0.45"/><rect x="8" y="144.5" width="18" height="1.7" fill="#098658" opacity="0.45"/><rect x="6" y="146.5" width="1" height="1.7" fill="#098658" opacity="0.45"/><rect x="8" y="146.5" width="17" height="1.7" fill="#098658" opacity="0.45"/><rect x="6" y="148.5" width="1" height="1.7" fill="#098658" opacity="0.45"/><rect x="8" y="148.5" width="18" height="1.7" fill="#098658" opacity="0.45"/><rect x="6" y="150.5" width="1" height="1.7" fill="#098658" opacity="0.45"/><rect x="8" y="150.5" width="19" height="1.7" fill="#098658" opacity="0.45"/><rect x="6" y="152.5" width="1" height="1.7" fill="#098658" opacity="0.45"/><rect x="8" y="152.5" width="16" height="1.7" fill="#098658" opacity="0.45"/><rect x="6" y="154.5" width="2" height="1.7" fill="#098658" opacity="0.45"/><rect x="9" y="154.5" width="19" height="1.7" fill="#098658" opacity="0.45"/><rect x="6" y="156.5" width="1" height="1.7" fill="#098658" opacity="0.45"/><rect x="8" y="156.5" width="18" height="1.7" fill="#098658" opacity="0.45"/><rect x="6" y="158.5" width="2" height="1.7" fill="#098658" opacity="0.45"/><rect x="9" y="158.5" width="18" height="1.7" fill="#098658" opacity="0.45"/><rect x="6" y="160.5" width="2" height="1.7" fill="#098658" opacity="0.45"/><rect x="9" y="160.5" width="19" height="1.7" fill="#098658" opacity="0.45"/><rect x="6" y="162.5" width="2" height="1.7" fill="#098658" opacity="0.45"/><rect x="9" y="162.5" width="17" height="1.7" fill="#098658" opacity="0.45"/><rect x="6" y="164.5" width="2" height="1.7" fill="#098658" opacity="0.45"/><rect x="9" y="164.5" width="17" height="1.7" fill="#098658" opacity="0.45"/><rect x="6" y="166.5" width="2" height="1.7" fill="#098658" opacity="0.45"/><rect x="9" y="166.5" width="16" height="1.7" fill="#098658" opacity="0.45"/><rect x="6" y="168.5" width="2" height="1.7" fill="#098658" opacity="0.45"/><rect x="9" y="168.5" width="16" height="1.7" fill="#098658" opacity="0.45"/><rect x="6" y="170.5" width="2" height="1.7" fill="#098658" opacity="0.45"/><rect x="9" y="170.5" width="18" height="1.7" fill="#098658" opacity="0.45"/><rect x="6" y="172.5" width="2" height="1.7" fill="#098658" opacity="0.45"/><rect x="9" y="172.5" width="16" height="1.7" fill="#098658" opacity="0.45"/><rect x="6" y="174.5" width="1" height="1.7" fill="#098658" opacity="0.45"/><rect x="8" y="174.5" width="18" height="1.7" fill="#098658" opacity="0.45"/><rect x="6" y="176.5" width="2" height="1.7" fill="#098658" opacity="0.45"/><rect x="9" y="176.5" width="17" height="1.7" fill="#098658" opacity="0.45"/><rect x="6" y="178.5" width="1" height="1.7" fill="#098658" opacity="0.45"/><rect x="8" y="178.5" width="17" height="1.7" fill="#098658" opacity="0.45"/><rect x="6" y="180.5" width="1" height="1.7" fill="#098658" opacity="0.45"/><rect x="8" y="180.5" width="17" height="1.7" fill="#098658" opacity="0.45"/><rect x="6" y="182.5" width="1" height="1.7" fill="#098658" opacity="0.45"/><rect x="8" y="182.5" width="18" height="1.7" fill="#098658" opacity="0.45"/><rect x="6" y="184.5" width="2" height="1.7" fill="#098658" opacity="0.45"/><rect x="9" y="184.5" width="18" height="1.7" fill="#098658" opacity="0.45"/><rect x="6" y="186.5" width="1" height="1.7" fill="#098658" opacity="0.45"/><rect x="8" y="186.5" width="18" height="1.7" fill="#098658" opacity="0.45"/><rect x="6" y="188.5" width="2" height="1.7" fill="#098658" opacity="0.45"/><rect x="9" y="188.5" width="17" height="1.7" fill="#098658" opacity="0.45"/><rect x="6" y="190.5" width="2" height="1.7" fill="#098658" opacity="0.45"/><rect x="9" y="190.5" width="16" height="1.7" fill="#098658" opacity="0.45"/><rect x="6" y="192.5" width="1" height="1.7" fill="#098658" opacity="0.45"/><rect x="8" y="192.5" width="19" height="1.7" fill="#098658" opacity="0.45"/><rect x="6" y="194.5" width="2" height="1.7" fill="#098658" opacity="0.45"/><rect x="9" y="194.5" width="19" height="1.7" fill="#098658" opacity="0.45"/><rect x="6" y="196.5" width="2" height="1.7" fill="#098658" opacity="0.45"/><rect x="9" y="196.5" width="16" height="1.7" fill="#098658" opacity="0.45"/><rect x="6" y="198.5" width="2" height="1.7" fill="#098658" opacity="0.45"/><rect x="9" y="198.5" width="18" height="1.7" fill="#098658" opacity="0.45"/><rect x="6" y="200.5" width="2" height="1.7" fill="#098658" opacity="0.45"/><rect x="9" y="200.5" width="19" height="1.7" fill="#098658" opacity="0.45"/><rect x="6" y="202.5" width="1" height="1.7" fill="#098658" opacity="0.45"/><rect x="8" y="202.5" width="16" height="1.7" fill="#098658" opacity="0.45"/><rect x="6" y="204.5" width="1" height="1.7" fill="#098658" opacity="0.45"/><rect x="8" y="204.5" width="17" height="1.7" fill="#098658" opacity="0.45"/><rect x="6" y="206.5" width="1" height="1.7" fill="#098658" opacity="0.45"/><rect x="8" y="206.5" width="16" height="1.7" fill="#098658" opacity="0.45"/><rect x="6" y="208.5" width="1" height="1.7" fill="#098658" opacity="0.45"/><rect x="8" y="208.5" width="17" height="1.7" fill="#098658" opacity="0.45"/><rect x="6" y="210.5" width="1" height="1.7" fill="#098658" opacity="0.45"/><rect x="8" y="210.5" width="17" height="1.7" fill="#098658" opacity="0.45"/><rect x="6" y="212.5" width="2" height="1.7" fill="#098658" opacity="0.45"/><rect x="9" y="212.5" width="17" height="1.7" fill="#098658" opacity="0.45"/><rect x="6" y="214.5" width="1" height="1.7" fill="#098658" opacity="0.45"/><rect x="8" y="214.5" width="18" height="1.7" fill="#098658" opacity="0.45"/><rect x="6" y="216.5" width="2" height="1.7" fill="#098658" opacity="0.45"/><rect x="9" y="216.5" width="17" height="1.7" fill="#098658" opacity="0.45"/><rect x="6" y="218.5" width="1" height="1.7" fill="#098658" opacity="0.45"/><rect x="8" y="218.5" width="17" height="1.7" fill="#098658" opacity="0.45"/><rect x="6" y="220.5" width="1" height="1.7" fill="#098658" opacity="0.45"/><rect x="8" y="220.5" width="18" height="1.7" fill="#098658" opacity="0.45"/><rect x="6" y="222.5" width="1" height="1.7" fill="#098658" opacity="0.45"/><rect x="8" y="222.5" width="17" height="1.7" fill="#098658" opacity="0.45"/><rect x="6" y="224.5" width="2" height="1.7" fill="#098658" opacity="0.45"/><rect x="9" y="224.5" width="18" height="1.7" fill="#098658" opacity="0.45"/><rect x="6" y="226.5" width="2" height="1.7" fill="#098658" opacity="0.45"/><rect x="9" y="226.5" width="16" height="1.7" fill="#098658" opacity="0.45"/><rect x="6" y="228.5" width="1" height="1.7" fill="#098658" opacity="0.45"/><rect x="8" y="228.5" width="17" height="1.7" fill="#098658" opacity="0.45"/><rect x="6" y="230.5" width="2" height="1.7" fill="#098658" opacity="0.45"/><rect x="9" y="230.5" width="17" height="1.7" fill="#098658" opacity="0.45"/><rect x="6" y="232.5" width="1" height="1.7" fill="#098658" opacity="0.45"/><rect x="8" y="232.5" width="17" height="1.7" fill="#098658" opacity="0.45"/><rect x="6" y="234.5" width="2" height="1.7" fill="#098658" opacity="0.45"/><rect x="9" y="234.5" width="19" height="1.7" fill="#098658" opacity="0.45"/><rect x="6" y="236.5" width="1" height="1.7" fill="#098658" opacity="0.45"/><rect x="8" y="236.5" width="17" height="1.7" fill="#098658" opacity="0.45"/><rect x="6" y="238.5" width="2" height="1.7" fill="#098658" opacity="0.45"/><rect x="9" y="238.5" width="16" height="1.7" fill="#098658" opacity="0.45"/><rect x="6" y="240.5" width="2" height="1.7" fill="#098658" opacity="0.45"/><rect x="9" y="240.5" width="17" height="1.7" fill="#098658" opacity="0.45"/><rect x="6" y="242.5" width="2" height="1.7" fill="#098658" opacity="0.45"/><rect x="9" y="242.5" width="18" height="1.7" fill="#098658" opacity="0.45"/><rect x="6" y="244.5" width="1" height="1.7" fill="#098658" opacity="0.45"/><rect x="8" y="244.5" width="18" height="1.7" fill="#098658" opacity="0.45"/><rect x="6" y="246.5" width="1" height="1.7" fill="#098658" opacity="0.45"/><rect x="8" y="246.5" width="18" height="1.7" fill="#098658" opacity="0.45"/><rect x="6" y="248.5" width="1" height="1.7" fill="#098658" opacity="0.45"/><rect x="8" y="248.5" width="17" height="1.7" fill="#098658" opacity="0.45"/><rect x="6" y="250.5" width="1" height="1.7" fill="#098658" opacity="0.45"/><rect x="8" y="250.5" width="16" height="1.7" fill="#098658" opacity="0.45"/><rect x="6" y="252.5" width="1" height="1.7" fill="#098658" opacity="0.45"/><rect x="8" y="252.5" width="16" height="1.7" fill="#098658" opacity="0.45"/><rect x="6" y="254.5" width="1" height="1.7" fill="#098658" opacity="0.45"/><rect x="8" y="254.5" width="19" height="1.7" fill="#098658" opacity="0.45"/><rect x="6" y="256.5" width="1" height="1.7" fill="#098658" opacity="0.45"/><rect x="8" y="256.5" width="18" height="1.7" fill="#098658" opacity="0.45"/><rect x="6" y="258.5" width="1" height="1.7" fill="#098658" opacity="0.45"/><rect x="8" y="258.5" width="18" height="1.7" fill="#098658" opacity="0.45"/><rect x="6" y="260.5" width="1" height="1.7" fill="#098658" opacity="0.45"/><rect x="8" y="260.5" width="17" height="1.7" fill="#098658" opacity="0.45"/><rect x="6" y="262.5" width="2" height="1.7" fill="#098658" opacity="0.45"/><rect x="9" y="262.5" width="19" height="1.7" fill="#098658" opacity="0.45"/><rect x="6" y="264.5" width="2" height="1.7" fill="#098658" opacity="0.45"/><rect x="9" y="264.5" width="18" height="1.7" fill="#098658" opacity="0.45"/><rect x="6" y="266.5" width="1" height="1.7" fill="#098658" opacity="0.45"/><rect x="8" y="266.5" width="16" height="1.7" fill="#098658" opacity="0.45"/><rect x="6" y="268.5" width="1" height="1.7" fill="#098658" opacity="0.45"/><rect x="8" y="268.5" width="17" height="1.7" fill="#098658" opacity="0.45"/><rect x="6" y="270.5" width="1" height="1.7" fill="#098658" opacity="0.45"/><rect x="8" y="270.5" width="16" height="1.7" fill="#098658" opacity="0.45"/><rect x="6" y="272.5" width="2" height="1.7" fill="#098658" opacity="0.45"/><rect x="9" y="272.5" width="18" height="1.7" fill="#098658" opacity="0.45"/><rect x="6" y="274.5" width="1" height="1.7" fill="#098658" opacity="0.45"/><rect x="8" y="274.5" width="17" height="1.7" fill="#098658" opacity="0.45"/><rect x="6" y="276.5" width="1" height="1.7" fill="#098658" opacity="0.45"/><rect x="8" y="276.5" width="18" height="1.7" fill="#098658" opacity="0.45"/><rect x="6" y="278.5" width="1" height="1.7" fill="#098658" opacity="0.45"/><rect x="8" y="278.5" width="19" height="1.7" fill="#098658" opacity="0.45"/><rect x="6" y="280.5" width="1" height="1.7" fill="#098658" opacity="0.45"/><rect x="8" y="280.5" width="17" height="1.7" fill="#098658" opacity="0.45"/><rect x="6" y="282.5" width="1" height="1.7" fill="#098658" opacity="0.45"/><rect x="8" y="282.5" width="17" height="1.7" fill="#098658" opacity="0.45"/><rect x="6" y="284.5" width="2" height="1.7" fill="#098658" opacity="0.45"/><rect x="9" y="284.5" width="19" height="1.7" fill="#098658" opacity="0.45"/><rect x="6" y="286.5" width="1" height="1.7" fill="#098658" opacity="0.45"/><rect x="8" y="286.5" width="18" height="1.7" fill="#098658" opacity="0.45"/><rect x="6" y="288.5" width="1" height="1.7" fill="#098658" opacity="0.45"/><rect x="8" y="288.5" width="17" height="1.7" fill="#098658" opacity="0.45"/><rect x="6" y="290.5" width="2" height="1.7" fill="#098658" opacity="0.45"/><rect x="9" y="290.5" width="17" height="1.7" fill="#098658" opacity="0.45"/><rect x="6" y="292.5" width="1" height="1.7" fill="#098658" opacity="0.45"/><rect x="8" y="292.5" width="17" height="1.7" fill="#098658" opacity="0.45"/><rect x="6" y="294.5" width="2" height="1.7" fill="#098658" opacity="0.45"/><rect x="9" y="294.5" width="17" height="1.7" fill="#098658" opacity="0.45"/><rect x="6" y="296.5" width="2" height="1.7" fill="#098658" opacity="0.45"/><rect x="9" y="296.5" width="17" height="1.7" fill="#098658" opacity="0.45"/><rect x="6" y="298.5" width="1" height="1.7" fill="#098658" opacity="0.45"/><rect x="8" y="298.5" width="17" height="1.7" fill="#098658" opacity="0.45"/><rect x="6" y="300.5" width="2" height="1.7" fill="#098658" opacity="0.45"/><rect x="9" y="300.5" width="18" height="1.7" fill="#098658" opacity="0.45"/><rect x="6" y="302.5" width="1" height="1.7" fill="#098658" opacity="0.45"/><rect x="8" y="302.5" width="16" height="1.7" fill="#098658" opacity="0.45"/><rect x="6" y="304.5" width="1" height="1.7" fill="#098658" opacity="0.45"/><rect x="8" y="304.5" width="17" height="1.7" fill="#098658" opacity="0.45"/><rect x="6" y="306.5" width="1" height="1.7" fill="#098658" opacity="0.45"/><rect x="8" y="306.5" width="19" height="1.7" fill="#098658" opacity="0.45"/><rect x="6" y="308.5" width="1" height="1.7" fill="#098658" opacity="0.45"/><rect x="8" y="308.5" width="18" height="1.7" fill="#098658" opacity="0.45"/><rect x="6" y="310.5" width="2" height="1.7" fill="#098658" opacity="0.45"/><rect x="9" y="310.5" width="18" height="1.7" fill="#098658" opacity="0.45"/><rect x="6" y="312.5" width="2" height="1.7" fill="#098658" opacity="0.45"/><rect x="9" y="312.5" width="17" height="1.7" fill="#098658" opacity="0.45"/><rect x="6" y="314.5" width="1" height="1.7" fill="#098658" opacity="0.45"/><rect x="8" y="314.5" width="16" height="1.7" fill="#098658" opacity="0.45"/><rect x="6" y="316.5" width="1" height="1.7" fill="#098658" opacity="0.45"/><rect x="8" y="316.5" width="17" height="1.7" fill="#098658" opacity="0.45"/><rect x="6" y="318.5" width="1" height="1.7" fill="#098658" opacity="0.45"/><rect x="8" y="318.5" width="17" height="1.7" fill="#098658" opacity="0.45"/><rect x="6" y="320.5" width="2" height="1.7" fill="#098658" opacity="0.45"/><rect x="9" y="320.5" width="18" height="1.7" fill="#098658" opacity="0.45"/><rect x="6" y="322.5" width="1" height="1.7" fill="#098658" opacity="0.45"/><rect x="8" y="322.5" width="16" height="1.7" fill="#098658" opacity="0.45"/><rect x="6" y="324.5" width="1" height="1.7" fill="#098658" opacity="0.45"/><rect x="8" y="324.5" width="17" height="1.7" fill="#098658" opacity="0.45"/><rect x="6" y="326.5" width="1" height="1.7" fill="#098658" opacity="0.45"/><rect x="8" y="326.5" width="18" height="1.7" fill="#098658" opacity="0.45"/><rect x="6" y="328.5" width="1" height="1.7" fill="#098658" opacity="0.45"/><rect x="8" y="328.5" width="16" height="1.7" fill="#098658" opacity="0.45"/><rect x="6" y="330.5" width="1" height="1.7" fill="#098658" opacity="0.45"/><rect x="8" y="330.5" width="16" height="1.7" fill="#098658" opacity="0.45"/><rect x="6" y="332.5" width="2" height="1.7" fill="#098658" opacity="0.45"/><rect x="9" y="332.5" width="17" height="1.7" fill="#098658" opacity="0.45"/><rect x="6" y="334.5" width="2" height="1.7" fill="#098658" opacity="0.45"/><rect x="9" y="334.5" width="16" height="1.7" fill="#098658" opacity="0.45"/><rect x="6" y="336.5" width="1" height="1.7" fill="#098658" opacity="0.45"/><rect x="8" y="336.5" width="18" height="1.7" fill="#098658" opacity="0.45"/><rect x="6" y="338.5" width="2" height="1.7" fill="#098658" opacity="0.45"/><rect x="9" y="338.5" width="16" height="1.7" fill="#098658" opacity="0.45"/><rect x="6" y="340.5" width="2" height="1.7" fill="#098658" opacity="0.45"/><rect x="9" y="340.5" width="18" height="1.7" fill="#098658" opacity="0.45"/><rect x="6" y="342.5" width="1" height="1.7" fill="#098658" opacity="0.45"/><rect x="8" y="342.5" width="18" height="1.7" fill="#098658" opacity="0.45"/><rect x="6" y="344.5" width="1" height="1.7" fill="#098658" opacity="0.45"/><rect x="8" y="344.5" width="19" height="1.7" fill="#098658" opacity="0.45"/><rect x="6" y="346.5" width="2" height="1.7" fill="#098658" opacity="0.45"/><rect x="9" y="346.5" width="18" height="1.7" fill="#098658" opacity="0.45"/><rect x="6" y="348.5" width="1" height="1.7" fill="#098658" opacity="0.45"/><rect x="8" y="348.5" width="18" height="1.7" fill="#098658" opacity="0.45"/><rect x="6" y="350.5" width="1" height="1.7" fill="#098658" opacity="0.45"/><rect x="8" y="350.5" width="17" height="1.7" fill="#098658" opacity="0.45"/><rect x="6" y="352.5" width="1" height="1.7" fill="#098658" opacity="0.45"/><rect x="8" y="352.5" width="17" height="1.7" fill="#098658" opacity="0.45"/><rect x="6" y="354.5" width="1" height="1.7" fill="#098658" opacity="0.45"/><rect x="8" y="354.5" width="17" height="1.7" fill="#098658" opacity="0.45"/><rect x="6" y="356.5" width="1" height="1.7" fill="#098658" opacity="0.45"/><rect x="8" y="356.5" width="17" height="1.7" fill="#098658" opacity="0.45"/><rect x="6" y="358.5" width="2" height="1.7" fill="#098658" opacity="0.45"/><rect x="9" y="358.5" width="18" height="1.7" fill="#098658" opacity="0.45"/><rect x="6" y="360.5" width="2" height="1.7" fill="#098658" opacity="0.45"/><rect x="9" y="360.5" width="16" height="1.7" fill="#098658" opacity="0.45"/><rect x="6" y="362.5" width="1" height="1.7" fill="#098658" opacity="0.45"/><rect x="8" y="362.5" width="18" height="1.7" fill="#098658" opacity="0.45"/><rect x="6" y="364.5" width="2" height="1.7" fill="#098658" opacity="0.45"/><rect x="9" y="364.5" width="19" height="1.7" fill="#098658" opacity="0.45"/><rect x="6" y="366.5" width="2" height="1.7" fill="#098658" opacity="0.45"/><rect x="9" y="366.5" width="16" height="1.7" fill="#098658" opacity="0.45"/><rect x="6" y="368.5" width="1" height="1.7" fill="#098658" opacity="0.45"/><rect x="8" y="368.5" width="17" height="1.7" fill="#098658" opacity="0.45"/><rect x="6" y="370.5" width="1" height="1.7" fill="#098658" opacity="0.45"/><rect x="8" y="370.5" width="19" height="1.7" fill="#098658" opacity="0.45"/><rect x="6" y="372.5" width="1" height="1.7" fill="#098658" opacity="0.45"/><rect x="8" y="372.5" width="17" height="1.7" fill="#098658" opacity="0.45"/><rect x="6" y="374.5" width="2" height="1.7" fill="#098658" opacity="0.45"/><rect x="9" y="374.5" width="17" height="1.7" fill="#098658" opacity="0.45"/><rect x="6" y="376.5" width="1" height="1.7" fill="#098658" opacity="0.45"/><rect x="8" y="376.5" width="17" height="1.7" fill="#098658" opacity="0.45"/><rect x="6" y="378.5" width="1" height="1.7" fill="#098658" opacity="0.45"/><rect x="8" y="378.5" width="16" height="1.7" fill="#098658" opacity="0.45"/><rect x="6" y="380.5" width="2" height="1.7" fill="#098658" opacity="0.45"/><rect x="9" y="380.5" width="18" height="1.7" fill="#098658" opacity="0.45"/><rect x="6" y="382.5" width="2" height="1.7" fill="#098658" opacity="0.45"/><rect x="9" y="382.5" width="19" height="1.7" fill="#098658" opacity="0.45"/><rect x="6" y="384.5" width="1" height="1.7" fill="#098658" opacity="0.45"/><rect x="8" y="384.5" width="17" height="1.7" fill="#098658" opacity="0.45"/><rect x="6" y="386.5" width="1" height="1.7" fill="#098658" opacity="0.45"/><rect x="8" y="386.5" width="18" height="1.7" fill="#098658" opacity="0.45"/><rect x="6" y="388.5" width="2" height="1.7" fill="#098658" opacity="0.45"/><rect x="9" y="388.5" width="18" height="1.7" fill="#098658" opacity="0.45"/><rect x="6" y="390.5" width="2" height="1.7" fill="#098658" opacity="0.45"/><rect x="9" y="390.5" width="17" height="1.7" fill="#098658" opacity="0.45"/><rect x="6" y="392.5" width="2" height="1.7" fill="#098658" opacity="0.45"/><rect x="9" y="392.5" width="17" height="1.7" fill="#098658" opacity="0.45"/><rect x="6" y="394.5" width="2" height="1.7" fill="#098658" opacity="0.45"/><rect x="9" y="394.5" width="18" height="1.7" fill="#098658" opacity="0.45"/><rect x="6" y="396.5" width="2" height="1.7" fill="#098658" opacity="0.45"/><rect x="9" y="396.5" width="19" height="1.7" fill="#098658" opacity="0.45"/><rect x="6" y="398.5" width="2" height="1.7" fill="#098658" opacity="0.45"/><rect x="9" y="398.5" width="17" height="1.7" fill="#098658" opacity="0.45"/><rect x="6" y="400.5" width="1" height="1.7" fill="#098658" opacity="0.45"/><rect x="8" y="400.5" width="17" height="1.7" fill="#098658" opacity="0.45"/><rect x="6" y="402.5" width="1" height="1.7" fill="#098658" opacity="0.45"/><rect x="8" y="402.5" width="16" height="1.7" fill="#098658" opacity="0.45"/><rect x="6" y="404.5" width="2" height="1.7" fill="#098658" opacity="0.45"/><rect x="9" y="404.5" width="17" height="1.7" fill="#098658" opacity="0.45"/><rect x="6" y="406.5" width="1" height="1.7" fill="#098658" opacity="0.45"/><rect x="8" y="406.5" width="16" height="1.7" fill="#098658" opacity="0.45"/><rect x="6" y="408.5" width="2" height="1.7" fill="#098658" opacity="0.45"/><rect x="9" y="408.5" width="17" height="1.7" fill="#098658" opacity="0.45"/><rect x="6" y="410.5" width="2" height="1.7" fill="#098658" opacity="0.45"/><rect x="9" y="410.5" width="17" height="1.7" fill="#098658" opacity="0.45"/><rect x="6" y="412.5" width="2" height="1.7" fill="#098658" opacity="0.45"/><rect x="9" y="412.5" width="17" height="1.7" fill="#098658" opacity="0.45"/><rect x="6" y="414.5" width="1" height="1.7" fill="#098658" opacity="0.45"/><rect x="8" y="414.5" width="19" height="1.7" fill="#098658" opacity="0.45"/><rect x="6" y="416.5" width="1" height="1.7" fill="#098658" opacity="0.45"/><rect x="8" y="416.5" width="17" height="1.7" fill="#098658" opacity="0.45"/><rect x="6" y="418.5" width="2" height="1.7" fill="#098658" opacity="0.45"/><rect x="9" y="418.5" width="18" height="1.7" fill="#098658" opacity="0.45"/><rect x="6" y="420.5" width="1" height="1.7" fill="#098658" opacity="0.45"/><rect x="8" y="420.5" width="18" height="1.7" fill="#098658" opacity="0.45"/><rect x="6" y="422.5" width="2" height="1.7" fill="#098658" opacity="0.45"/><rect x="9" y="422.5" width="17" height="1.7" fill="#098658" opacity="0.45"/><rect x="6" y="424.5" width="2" height="1.7" fill="#098658" opacity="0.45"/><rect x="9" y="424.5" width="16" height="1.7" fill="#098658" opacity="0.45"/><rect x="6" y="426.5" width="1" height="1.7" fill="#098658" opacity="0.45"/><rect x="8" y="426.5" width="17" height="1.7" fill="#098658" opacity="0.45"/><rect x="6" y="428.5" width="2" height="1.7" fill="#098658" opacity="0.45"/><rect x="9" y="428.5" width="16" height="1.7" fill="#098658" opacity="0.45"/><rect x="6" y="430.5" width="2" height="1.7" fill="#098658" opacity="0.45"/><rect x="9" y="430.5" width="16" height="1.7" fill="#098658" opacity="0.45"/><rect x="6" y="432.5" width="1" height="1.7" fill="#098658" opacity="0.45"/><rect x="8" y="432.5" width="17" height="1.7" fill="#098658" opacity="0.45"/><rect x="6" y="434.5" width="2" height="1.7" fill="#098658" opacity="0.45"/><rect x="9" y="434.5" width="17" height="1.7" fill="#098658" opacity="0.45"/><rect x="6" y="436.5" width="2" height="1.7" fill="#098658" opacity="0.45"/><rect x="9" y="436.5" width="16" height="1.7" fill="#098658" opacity="0.45"/><rect x="6" y="438.5" width="2" height="1.7" fill="#098658" opacity="0.45"/><rect x="9" y="438.5" width="17" height="1.7" fill="#098658" opacity="0.45"/><rect x="6" y="440.5" width="1" height="1.7" fill="#098658" opacity="0.45"/><rect x="8" y="440.5" width="18" height="1.7" fill="#098658" opacity="0.45"/><rect x="6" y="442.5" width="1" height="1.7" fill="#098658" opacity="0.45"/><rect x="8" y="442.5" width="17" height="1.7" fill="#098658" opacity="0.45"/><rect x="6" y="444.5" width="1" height="1.7" fill="#098658" opacity="0.45"/><rect x="8" y="444.5" width="16" height="1.7" fill="#098658" opacity="0.45"/><rect x="6" y="446.5" width="1" height="1.7" fill="#098658" opacity="0.45"/><rect x="8" y="446.5" width="17" height="1.7" fill="#098658" opacity="0.45"/><rect x="6" y="448.5" width="1" height="1.7" fill="#098658" opacity="0.45"/><rect x="8" y="448.5" width="17" height="1.7" fill="#098658" opacity="0.45"/><rect x="6" y="450.5" width="2" height="1.7" fill="#098658" opacity="0.45"/><rect x="9" y="450.5" width="17" height="1.7" fill="#098658" opacity="0.45"/><rect x="6" y="452.5" width="2" height="1.7" fill="#098658" opacity="0.45"/><rect x="9" y="452.5" width="17" height="1.7" fill="#098658" opacity="0.45"/><rect x="6" y="454.5" width="1" height="1.7" fill="#098658" opacity="0.45"/><rect x="8" y="454.5" width="18" height="1.7" fill="#098658" opacity="0.45"/><rect x="6" y="456.5" width="1" height="1.7" fill="#098658" opacity="0.45"/><rect x="8" y="456.5" width="17" height="1.7" fill="#098658" opacity="0.45"/><rect x="6" y="458.5" width="2" height="1.7" fill="#098658" opacity="0.45"/><rect x="9" y="458.5" width="19" height="1.7" fill="#098658" opacity="0.45"/><rect x="6" y="460.5" width="2" height="1.7" fill="#098658" opacity="0.45"/><rect x="9" y="460.5" width="17" height="1.7" fill="#098658" opacity="0.45"/><rect x="6" y="462.5" width="1" height="1.7" fill="#098658" opacity="0.45"/><rect x="8" y="462.5" width="17" height="1.7" fill="#098658" opacity="0.45"/><rect x="6" y="464.5" width="2" height="1.7" fill="#098658" opacity="0.45"/><rect x="9" y="464.5" width="16" height="1.7" fill="#098658" opacity="0.45"/><rect x="6" y="466.5" width="1" height="1.7" fill="#098658" opacity="0.45"/><rect x="8" y="466.5" width="18" height="1.7" fill="#098658" opacity="0.45"/><rect x="6" y="468.5" width="1" height="1.7" fill="#098658" opacity="0.45"/><rect x="8" y="468.5" width="18" height="1.7" fill="#098658" opacity="0.45"/><rect x="6" y="470.5" width="2" height="1.7" fill="#098658" opacity="0.45"/><rect x="9" y="470.5" width="18" height="1.7" fill="#098658" opacity="0.45"/><rect x="6" y="472.5" width="2" height="1.7" fill="#098658" opacity="0.45"/><rect x="9" y="472.5" width="19" height="1.7" fill="#098658" opacity="0.45"/><rect x="6" y="474.5" width="2" height="1.7" fill="#098658" opacity="0.45"/><rect x="9" y="474.5" width="18" height="1.7" fill="#098658" opacity="0.45"/><rect x="6" y="476.5" width="1" height="1.7" fill="#098658" opacity="0.45"/><rect x="8" y="476.5" width="18" height="1.7" fill="#098658" opacity="0.45"/><rect x="6" y="478.5" width="1" height="1.7" fill="#098658" opacity="0.45"/><rect x="8" y="478.5" width="17" height="1.7" fill="#098658" opacity="0.45"/><rect x="6" y="480.5" width="1" height="1.7" fill="#098658" opacity="0.45"/><rect x="8" y="480.5" width="17" height="1.7" fill="#098658" opacity="0.45"/><rect x="6" y="482.5" width="2" height="1.7" fill="#098658" opacity="0.45"/><rect x="9" y="482.5" width="19" height="1.7" fill="#098658" opacity="0.45"/><rect x="6" y="484.5" width="1" height="1.7" fill="#098658" opacity="0.45"/><rect x="8" y="484.5" width="17" height="1.7" fill="#098658" opacity="0.45"/><rect x="6" y="486.5" width="2" height="1.7" fill="#098658" opacity="0.45"/><rect x="9" y="486.5" width="17" height="1.7" fill="#098658" opacity="0.45"/><rect x="6" y="488.5" width="1" height="1.7" fill="#098658" opacity="0.45"/><rect x="8" y="488.5" width="17" height="1.7" fill="#098658" opacity="0.45"/><rect x="6" y="490.5" width="2" height="1.7" fill="#098658" opacity="0.45"/><rect x="9" y="490.5" width="19" height="1.7" fill="#098658" opacity="0.45"/><rect x="6" y="492.5" width="1" height="1.7" fill="#098658" opacity="0.45"/><rect x="8" y="492.5" width="17" height="1.7" fill="#098658" opacity="0.45"/><rect x="6" y="494.5" width="2" height="1.7" fill="#098658" opacity="0.45"/><rect x="9" y="494.5" width="16" height="1.7" fill="#098658" opacity="0.45"/><rect x="6" y="496.5" width="2" height="1.7" fill="#098658" opacity="0.45"/><rect x="9" y="496.5" width="18" height="1.7" fill="#098658" opacity="0.45"/><rect x="6" y="498.5" width="1" height="1.7" fill="#098658" opacity="0.45"/><rect x="8" y="498.5" width="19" height="1.7" fill="#098658" opacity="0.45"/><rect x="6" y="500.5" width="1" height="1.7" fill="#098658" opacity="0.45"/><rect x="8" y="500.5" width="18" height="1.7" fill="#098658" opacity="0.45"/><rect x="6" y="502.5" width="2" height="1.7" fill="#098658" opacity="0.45"/><rect x="9" y="502.5" width="17" height="1.7" fill="#098658" opacity="0.45"/><rect x="6" y="504.5" width="2" height="1.7" fill="#098658" opacity="0.45"/><rect x="9" y="504.5" width="17" height="1.7" fill="#098658" opacity="0.45"/><rect x="6" y="506.5" width="2" height="1.7" fill="#098658" opacity="0.45"/><rect x="9" y="506.5" width="18" height="1.7" fill="#098658" opacity="0.45"/><rect x="6" y="508.5" width="2" height="1.7" fill="#098658" opacity="0.45"/><rect x="9" y="508.5" width="17" height="1.7" fill="#098658" opacity="0.45"/><rect x="6" y="510.5" width="1" height="1.7" fill="#098658" opacity="0.45"/><rect x="8" y="510.5" width="18" height="1.7" fill="#098658" opacity="0.45"/><rect x="6" y="512.5" width="2" height="1.7" fill="#098658" opacity="0.45"/><rect x="9" y="512.5" width="16" height="1.7" fill="#098658" opacity="0.45"/><rect x="6" y="514.5" width="1" height="1.7" fill="#098658" opacity="0.45"/><rect x="8" y="514.5" width="17" height="1.7" fill="#098658" opacity="0.45"/><rect x="6" y="516.5" width="2" height="1.7" fill="#098658" opacity="0.45"/><rect x="9" y="516.5" width="17" height="1.7" fill="#098658" opacity="0.45"/><rect x="6" y="518.5" width="2" height="1.7" fill="#098658" opacity="0.45"/><rect x="9" y="518.5" width="18" height="1.7" fill="#098658" opacity="0.45"/><rect x="6" y="520.5" width="2" height="1.7" fill="#098658" opacity="0.45"/><rect x="9" y="520.5" width="17" height="1.7" fill="#098658" opacity="0.45"/><rect x="6" y="522.5" width="1" height="1.7" fill="#098658" opacity="0.45"/><rect x="8" y="522.5" width="17" height="1.7" fill="#098658" opacity="0.45"/><rect x="6" y="524.5" width="2" height="1.7" fill="#098658" opacity="0.45"/><rect x="9" y="524.5" width="16" height="1.7" fill="#098658" opacity="0.45"/><rect x="6" y="526.5" width="2" height="1.7" fill="#098658" opacity="0.45"/><rect x="9" y="526.5" width="16" height="1.7" fill="#098658" opacity="0.45"/><rect x="6" y="528.5" width="2" height="1.7" fill="#098658" opacity="0.45"/><rect x="9" y="528.5" width="18" height="1.7" fill="#098658" opacity="0.45"/><rect x="6" y="530.5" width="2" height="1.7" fill="#098658" opacity="0.45"/><rect x="9" y="530.5" width="16" height="1.7" fill="#098658" opacity="0.45"/><rect x="6" y="532.5" width="2" height="1.7" fill="#098658" opacity="0.45"/><rect x="9" y="532.5" width="19" height="1.7" fill="#098658" opacity="0.45"/><rect x="6" y="534.5" width="2" height="1.7" fill="#098658" opacity="0.45"/><rect x="9" y="534.5" width="18" height="1.7" fill="#098658" opacity="0.45"/><rect x="6" y="536.5" width="1" height="1.7" fill="#098658" opacity="0.45"/><rect x="8" y="536.5" width="17" height="1.7" fill="#098658" opacity="0.45"/><rect x="6" y="538.5" width="1" height="1.7" fill="#098658" opacity="0.45"/><rect x="8" y="538.5" width="19" height="1.7" fill="#098658" opacity="0.45"/><rect x="6" y="540.5" width="1" height="1.7" fill="#098658" opacity="0.45"/><rect x="8" y="540.5" width="18" height="1.7" fill="#098658" opacity="0.45"/><rect x="6" y="542.5" width="2" height="1.7" fill="#098658" opacity="0.45"/><rect x="9" y="542.5" width="17" height="1.7" fill="#098658" opacity="0.45"/><rect x="6" y="544.5" width="1" height="1.7" fill="#098658" opacity="0.45"/><rect x="8" y="544.5" width="18" height="1.7" fill="#098658" opacity="0.45"/><rect x="6" y="546.5" width="2" height="1.7" fill="#098658" opacity="0.45"/><rect x="9" y="546.5" width="19" height="1.7" fill="#098658" opacity="0.45"/><rect x="6" y="548.5" width="1" height="1.7" fill="#098658" opacity="0.45"/><rect x="8" y="548.5" width="17" height="1.7" fill="#098658" opacity="0.45"/><rect x="6" y="550.5" width="2" height="1.7" fill="#098658" opacity="0.45"/><rect x="9" y="550.5" width="19" height="1.7" fill="#098658" opacity="0.45"/><rect x="6" y="552.5" width="1" height="1.7" fill="#098658" opacity="0.45"/><rect x="8" y="552.5" width="19" height="1.7" fill="#098658" opacity="0.45"/><rect x="6" y="554.5" width="2" height="1.7" fill="#098658" opacity="0.45"/><rect x="9" y="554.5" width="19" height="1.7" fill="#098658" opacity="0.45"/><rect x="6" y="556.5" width="1" height="1.7" fill="#098658" opacity="0.45"/><rect x="8" y="556.5" width="17" height="1.7" fill="#098658" opacity="0.45"/><rect x="6" y="558.5" width="1" height="1.7" fill="#098658" opacity="0.45"/><rect x="8" y="558.5" width="18" height="1.7" fill="#098658" opacity="0.45"/><rect x="6" y="560.5" width="1" height="1.7" fill="#098658" opacity="0.45"/><rect x="8" y="560.5" width="16" height="1.7" fill="#098658" opacity="0.45"/><rect x="6" y="562.5" width="1" height="1.7" fill="#098658" opacity="0.45"/><rect x="8" y="562.5" width="18" height="1.7" fill="#098658" opacity="0.45"/><rect x="6" y="564.5" width="1" height="1.7" fill="#098658" opacity="0.45"/><rect x="8" y="564.5" width="19" height="1.7" fill="#098658" opacity="0.45"/><rect x="6" y="566.5" width="1" height="1.7" fill="#098658" opacity="0.45"/><rect x="8" y="566.5" width="19" height="1.7" fill="#098658" opacity="0.45"/><rect x="6" y="568.5" width="1" height="1.7" fill="#098658" opacity="0.45"/><rect x="8" y="568.5" width="16" height="1.7" fill="#098658" opacity="0.45"/><rect x="6" y="570.5" width="2" height="1.7" fill="#098658" opacity="0.45"/><rect x="9" y="570.5" width="17" height="1.7" fill="#098658" opacity="0.45"/><rect x="6" y="572.5" width="1" height="1.7" fill="#098658" opacity="0.45"/><rect x="8" y="572.5" width="16" height="1.7" fill="#098658" opacity="0.45"/><rect x="6" y="574.5" width="2" height="1.7" fill="#098658" opacity="0.45"/><rect x="9" y="574.5" width="18" height="1.7" fill="#098658" opacity="0.45"/><rect x="6" y="576.5" width="1" height="1.7" fill="#098658" opacity="0.45"/><rect x="8" y="576.5" width="19" height="1.7" fill="#098658" opacity="0.45"/><rect x="6" y="578.5" width="2" height="1.7" fill="#098658" opacity="0.45"/><rect x="9" y="578.5" width="18" height="1.7" fill="#098658" opacity="0.45"/><rect x="6" y="580.5" width="1" height="1.7" fill="#098658" opacity="0.45"/><rect x="8" y="580.5" width="18" height="1.7" fill="#098658" opacity="0.45"/><rect x="6" y="582.5" width="2" height="1.7" fill="#098658" opacity="0.45"/><rect x="9" y="582.5" width="18" height="1.7" fill="#098658" opacity="0.45"/><rect x="6" y="584.5" width="1" height="1.7" fill="#098658" opacity="0.45"/><rect x="8" y="584.5" width="19" height="1.7" fill="#098658" opacity="0.45"/><rect x="6" y="586.5" width="1" height="1.7" fill="#098658" opacity="0.45"/><rect x="8" y="586.5" width="18" height="1.7" fill="#098658" opacity="0.45"/><rect x="6" y="588.5" width="2" height="1.7" fill="#098658" opacity="0.45"/><rect x="9" y="588.5" width="18" height="1.7" fill="#098658" opacity="0.45"/><rect x="6" y="590.5" width="2" height="1.7" fill="#098658" opacity="0.45"/><rect x="9" y="590.5" width="19" height="1.7" fill="#098658" opacity="0.45"/><rect x="6" y="592.5" width="2" height="1.7" fill="#098658" opacity="0.45"/><rect x="9" y="592.5" width="16" height="1.7" fill="#098658" opacity="0.45"/><rect x="6" y="594.5" width="1" height="1.7" fill="#098658" opacity="0.45"/><rect x="8" y="594.5" width="17" height="1.7" fill="#098658" opacity="0.45"/><rect x="6" y="596.5" width="1" height="1.7" fill="#098658" opacity="0.45"/><rect x="8" y="596.5" width="17" height="1.7" fill="#098658" opacity="0.45"/><rect x="6" y="598.5" width="2" height="1.7" fill="#098658" opacity="0.45"/><rect x="9" y="598.5" width="19" height="1.7" fill="#098658" opacity="0.45"/><rect x="6" y="600.5" width="1" height="1.7" fill="#098658" opacity="0.45"/><rect x="8" y="600.5" width="18" height="1.7" fill="#098658" opacity="0.45"/><rect x="6" y="602.5" width="1" height="1.7" fill="#098658" opacity="0.45"/><rect x="8" y="602.5" width="16" height="1.7" fill="#098658" opacity="0.45"/><rect x="6" y="604.5" width="2" height="1.7" fill="#098658" opacity="0.45"/><rect x="9" y="604.5" width="19" height="1.7" fill="#098658" opacity="0.45"/><rect x="6" y="606.5" width="2" height="1.7" fill="#098658" opacity="0.45"/><rect x="9" y="606.5" width="16" height="1.7" fill="#098658" opacity="0.45"/><rect x="6" y="608.5" width="1" height="1.7" fill="#098658" opacity="0.45"/><rect x="8" y="608.5" width="19" height="1.7" fill="#098658" opacity="0.45"/><rect x="6" y="610.5" width="2" height="1.7" fill="#098658" opacity="0.45"/><rect x="9" y="610.5" width="18" height="1.7" fill="#098658" opacity="0.45"/><rect x="6" y="612.5" width="2" height="1.7" fill="#098658" opacity="0.45"/><rect x="9" y="612.5" width="17" height="1.7" fill="#098658" opacity="0.45"/><rect x="6" y="614.5" width="1" height="1.7" fill="#098658" opacity="0.45"/><rect x="8" y="614.5" width="19" height="1.7" fill="#098658" opacity="0.45"/><rect x="6" y="616.5" width="2" height="1.7" fill="#098658" opacity="0.45"/><rect x="9" y="616.5" width="18" height="1.7" fill="#098658" opacity="0.45"/><rect x="6" y="618.5" width="2" height="1.7" fill="#098658" opacity="0.45"/><rect x="9" y="618.5" width="18" height="1.7" fill="#098658" opacity="0.45"/><rect x="6" y="620.5" width="2" height="1.7" fill="#098658" opacity="0.45"/><rect x="9" y="620.5" width="17" height="1.7" fill="#098658" opacity="0.45"/><rect x="6" y="622.5" width="1" height="1.7" fill="#098658" opacity="0.45"/><rect x="8" y="622.5" width="16" height="1.7" fill="#098658" opacity="0.45"/><rect x="6" y="624.5" width="1" height="1.7" fill="#098658" opacity="0.45"/><rect x="8" y="624.5" width="19" height="1.7" fill="#098658" opacity="0.45"/></svg>
<div class="r" style="left:1899px;top:133px;width:1px;height:627px;background:#f0f0f0;"></div>
<div class="r" style="left:1900px;top:133px;width:20px;height:29px;background:#c6c6c6;"></div>
<div class="r" style="left:1900px;top:133px;width:20px;height:2px;background:#7a7a7a;"></div>
<div class="r" style="left:1906px;top:135px;width:7px;height:6px;background:#9a9a9a;"></div>
<div class="r" style="left:1906px;top:751px;width:7px;height:8px;background:#a0a0a0;"></div>
<div class="t" style="left:343px;top:767.52px;font-size:13.8px;color:#616161;font-family:'Liberation Sans', sans-serif;">PROBLEMS</div>
<div class="t" style="left:454.5px;top:767.52px;font-size:13.8px;color:#616161;font-family:'Liberation Sans', sans-serif;">OUTPUT</div>
<div class="t" style="left:548.5px;top:767.52px;font-size:13.8px;color:#616161;font-family:'Liberation Sans', sans-serif;">DEBUG CONSOLE</div>
<div class="t" style="left:706px;top:767.52px;font-size:13.8px;color:#3b3b3b;font-family:'Liberation Sans', sans-serif;">TERMINAL</div>
<div class="t" style="left:814.5px;top:767.52px;font-size:13.8px;color:#616161;font-family:'Liberation Sans', sans-serif;">PORTS</div>
<div class="r" style="left:703px;top:801px;width:80px;height:1.5px;background:#005fb8;"></div>
<svg class="s" style="left:1533px;top:776px;" width="21" height="21" viewBox="0 0 21 21"><rect x="0.8" y="0.8" width="19.4" height="19.4" rx="2.8" stroke="#3b3b3b" stroke-width="1.5" fill="none"/><path d="M4.5 6 L9.5 10.5 L4.5 15 M10 16 H16.5" stroke="#3b3b3b" stroke-width="1.5" fill="none"/></svg>
<div class="t" style="left:1561px;top:766.93px;font-size:15.5px;color:#3b3b3b;font-family:'Liberation Sans', sans-serif;">powershell</div>
<svg class="s" style="left:1651.5px;top:776px;" width="20" height="20" viewBox="0 0 20 20"><path d="M10 0.5 V19 M0.5 9.7 H19.5" stroke="#3b3b3b" stroke-width="1.5"/></svg>
<svg class="s" style="left:1678.5px;top:782px;" width="13" height="8" viewBox="0 0 13 8"><path d="M1 1.2 L6.5 6.7 L12 1.2" stroke="#3b3b3b" stroke-width="1.3" fill="none"/></svg>
<svg class="s" style="left:1708px;top:776px;" width="20.5" height="21" viewBox="0 0 20.5 21"><rect x="0.8" y="0.8" width="19" height="19.4" rx="2.8" stroke="#3b3b3b" stroke-width="1.5" fill="none"/><path d="M10.3 0.8 V20" stroke="#3b3b3b" stroke-width="1.5"/></svg>
<svg class="s" style="left:1745.5px;top:774.5px;" width="20" height="23" viewBox="0 0 20 23"><path d="M0.8 4.5 H19.2 M7 4.5 V2.5 Q7 1 8.5 1 H11.5 Q13 1 13 2.5 V4.5 M3 4.5 L4.6 19.5 Q4.8 21.5 6.8 21.5 H13.2 Q15.2 21.5 15.4 19.5 L17 4.5 M8 9 V17 M12 9 V17" stroke="#3b3b3b" stroke-width="1.5" fill="none"/></svg>
<svg class="s" style="left:1784.5px;top:783px;" width="18" height="7" viewBox="0 0 18 7"><circle cx="2.5" cy="3.4" r="1.6" fill="#3b3b3b"/><circle cx="8.5" cy="3.4" r="1.6" fill="#3b3b3b"/><circle cx="14.5" cy="3.4" r="1.6" fill="#3b3b3b"/></svg>
<div class="r" style="left:1820.5px;top:775px;width:1.2px;height:23px;background:#a8a8a8;"></div>
<svg class="s" style="left:1839.5px;top:776.5px;" width="19" height="19" viewBox="0 0 19 19"><path d="M1 6 V2.5 Q1 1 2.5 1 H6 M12.5 1 H16 Q17.5 1 17.5 2.5 V6 M17.5 12 V15.5 Q17.5 17 16 17 H12.5 M6 17 H2.5 Q1 17 1 15.5 V12" stroke="#3b3b3b" stroke-width="1.5" fill="none"/></svg>
<svg class="s" style="left:1879.5px;top:778.5px;" width="15" height="15" viewBox="0 0 15 15"><path d="M1 1 L13.5 13.5 M13.5 1 L1 13.5" stroke="#3b3b3b" stroke-width="1.5"/></svg>
<div class="t" style="left:343.00px;top:825.14px;font-size:19px;color:#3b3b3b;font-family:'Liberation Mono',monospace;letter-spacing:-0.4px;white-space:pre">modules.json: 100%|</div>
<div class="r" style="left:552px;top:830px;width:869px;height:25px;background:#3b3b3b;"></div>
<div class="t" style="left:1421.00px;top:825.14px;font-size:19px;color:#3b3b3b;font-family:'Liberation Mono',monospace;letter-spacing:-0.4px;white-space:pre">| 349/349 [00:00&lt;?, ?B/s]</div>
<div class="r" style="left:318px;top:856px;width:1580px;height:1px;background:#e3e3e3;"></div>
<div class="t" style="left:343.00px;top:853.44px;font-size:19px;color:#3b3b3b;font-family:'Liberation Mono',monospace;letter-spacing:-0.4px;white-space:pre">tokenizer.json: 466kB [00:00, 26.3MB/s]</div>
<div class="t" style="left:343.00px;top:878.30px;font-size:19px;color:#3b3b3b;font-family:'Liberation Mono',monospace;letter-spacing:-0.4px;white-space:pre">special_tokens_map.json: 100%|</div>
<div class="r" style="left:673px;top:883px;width:748px;height:25px;background:#3b3b3b;"></div>
<div class="t" style="left:1421.00px;top:878.30px;font-size:19px;color:#3b3b3b;font-family:'Liberation Mono',monospace;letter-spacing:-0.4px;white-space:pre">| 112/112 [00:00&lt;?, ?B/s]</div>
<div class="t" style="left:343.00px;top:903.16px;font-size:19px;color:#3b3b3b;font-family:'Liberation Mono',monospace;letter-spacing:-0.4px;white-space:pre">config.json: 100%|</div>
<div class="r" style="left:541px;top:908px;width:880px;height:25px;background:#3b3b3b;"></div>
<div class="t" style="left:1421.00px;top:903.16px;font-size:19px;color:#3b3b3b;font-family:'Liberation Mono',monospace;letter-spacing:-0.4px;white-space:pre">| 190/190 [00:00&lt;?, ?B/s]</div>
<svg class="s" style="left:345.7px;top:934.8px;" width="24" height="23" viewBox="0 0 24 23"><rect x="0.9" y="0.9" width="21.5" height="20.8" fill="#0b65c6" stroke="#161616" stroke-width="1.8"/><g transform="translate(23.3,0) scale(-1,1)"><path d="M6 10 A5.8 5.8 0 0 1 16.5 8" stroke="#fff" stroke-width="1.9" fill="none"/><path d="M17.6 4.6 L17.4 9.6 L12.6 8.6Z" fill="#fff"/><path d="M17.3 12.8 A5.8 5.8 0 0 1 6.8 14.8" stroke="#fff" stroke-width="1.9" fill="none"/><path d="M5.7 18.2 L5.9 13.2 L10.7 14.2Z" fill="#fff"/></g></svg>
<div class="t" style="left:376.00px;top:928.02px;font-size:19px;color:#3b3b3b;font-family:'Liberation Mono',monospace;letter-spacing:-0.4px;white-space:pre">Converting text into vectors...</div>
<svg class="s" style="left:345.7px;top:959.8px;" width="24" height="23" viewBox="0 0 24 23"><rect x="0.9" y="0.9" width="21.5" height="20.8" fill="#16c216" stroke="#161616" stroke-width="1.8"/><path d="M5.5 11.5 L9.8 15.8 L18 7" stroke="#fff" stroke-width="2.4" fill="none"/></svg>
<div class="t" style="left:376.00px;top:952.88px;font-size:19px;color:#3b3b3b;font-family:'Liberation Mono',monospace;letter-spacing:-0.4px;white-space:pre">Vector database created successfully!</div>
<svg class="s" style="left:323px;top:964px;" width="13" height="12" viewBox="0 0 13 12"><circle cx="6.4" cy="5.9" r="4.9" stroke="#b4b4b4" stroke-width="1.5" fill="none"/></svg>
<div class="t" style="left:343.00px;top:977.74px;font-size:19px;color:#3b3b3b;font-family:'Liberation Mono',monospace;letter-spacing:-0.4px;white-space:pre">PS C:\wamp64\www\Vector-Database&gt; </div>
<div class="r" style="left:717px;top:983px;width:11px;height:25px;background:transparent;border:1.2px solid #005fb8;box-sizing:border-box;"></div>
<div class="r" style="left:1899px;top:828px;width:1px;height:180px;background:#ececec;"></div>
<div class="r" style="left:1900px;top:832px;width:6px;height:5.5px;background:#2b8fd6;"></div>
<div class="r" style="left:1900px;top:955px;width:6px;height:8.5px;background:#2b8fd6;"></div>
<div class="r" style="left:1900px;top:1000px;width:6px;height:8px;background:#b8b8b8;"></div>
<div class="t" style="left:1599px;top:938.27px;font-size:20px;color:#bababa;font-family:'Liberation Sans', sans-serif;">Activate Windows</div>
<div class="t" style="left:1599px;top:961.20px;font-size:15px;color:#bababa;font-family:'Liberation Sans', sans-serif;">Go to Settings to activate Windows.</div>
<div class="r" style="left:314px;top:50px;width:10px;height:710px;background:linear-gradient(to right, rgba(0,0,0,0.035), rgba(0,0,0,0));"></div>
<div class="r" style="left:314px;top:748px;width:1606px;height:12px;background:linear-gradient(to bottom, rgba(0,0,0,0), rgba(0,0,0,0.035));"></div>
<svg class="s" style="left:18px;top:1013px;" width="16" height="20" viewBox="0 0 16 20"><path d="M1.5 18.5 L7.5 12.5 L1.5 6.5 M14.5 1.5 L8.5 7.5 L14.5 13.5" stroke="#3b3b3b" stroke-width="1.5" fill="none"/></svg>
<svg class="s" style="left:61.5px;top:1013.5px;" width="21" height="20" viewBox="0 0 21 20"><circle cx="10.3" cy="9.9" r="9.1" stroke="#3b3b3b" stroke-width="1.5" fill="none"/><path d="M6.6 6.2 L14 13.6 M14 6.2 L6.6 13.6" stroke="#3b3b3b" stroke-width="1.5"/></svg>
<div class="t" style="left:88.5px;top:1006.06px;font-size:16px;color:#3b3b3b;font-family:'Liberation Sans', sans-serif;">0</div>
<svg class="s" style="left:103.5px;top:1013.5px;" width="21" height="19" viewBox="0 0 21 19"><path d="M10.5 1.2 L19.8 17.8 H1.2 Z" stroke="#3b3b3b" stroke-width="1.5" fill="none" stroke-linejoin="round"/><path d="M10.5 6.5 V12.5" stroke="#3b3b3b" stroke-width="1.6"/><circle cx="10.5" cy="15" r="1" fill="#3b3b3b"/></svg>
<div class="t" style="left:130.5px;top:1006.06px;font-size:16px;color:#3b3b3b;font-family:'Liberation Sans', sans-serif;">0</div>
<svg class="s" style="left:166px;top:1013.5px;" width="16" height="20" viewBox="0 0 16 20"><ellipse cx="7.9" cy="3.5" rx="7" ry="2.7" stroke="#3b3b3b" stroke-width="1.4" fill="none"/><path d="M0.9 3.5 V16.2 Q0.9 19 7.9 19 Q14.9 19 14.9 16.2 V3.5" stroke="#3b3b3b" stroke-width="1.4" fill="none"/></svg>
<div class="t" style="left:190.5px;top:1006.26px;font-size:16px;color:#3b3b3b;font-family:'Liberation Sans', sans-serif;">Connect</div>
<div class="r" style="left:1270px;top:1009px;width:46px;height:29px;background:#c6c8cc;"></div>
<svg class="s" style="left:1282.5px;top:1013px;" width="20" height="20" viewBox="0 0 20 20"><circle cx="8" cy="8" r="6.8" stroke="#3b3b3b" stroke-width="1.5" fill="none"/><path d="M8 4.6 V11.4 M4.6 8 H11.4 M13 13 L18.5 18.6" stroke="#3b3b3b" stroke-width="1.5" fill="none"/></svg>
<div class="t" style="left:1327.5px;top:1006.26px;font-size:16px;color:#3b3b3b;font-family:'Liberation Sans', sans-serif;">Ln 1, Col 1</div>
<div class="t" style="left:1429.5px;top:1006.26px;font-size:16px;color:#3b3b3b;font-family:'Liberation Sans', sans-serif;">Spaces: 2</div>
<div class="t" style="left:1523px;top:1006.26px;font-size:16px;color:#3b3b3b;font-family:'Liberation Sans', sans-serif;">UTF-8</div>
<div class="t" style="left:1592px;top:1006.43px;font-size:15.5px;color:#3b3b3b;font-family:'Liberation Sans', sans-serif;letter-spacing:-0.8px;">CRLF</div>
<svg class="s" style="left:1655px;top:1014.5px;" width="20" height="21" viewBox="0 0 20 21"><path d="M4.5 1 Q2.5 1 2.5 3 V6.5 Q2.5 8.2 0.8 8.2 Q2.5 8.2 2.5 10 V13.5 Q2.5 15.5 4.5 15.5" stroke="#3b3b3b" stroke-width="1.4" fill="none"/><path d="M12 1 Q14 1 14 3 V8" stroke="#3b3b3b" stroke-width="1.4" fill="none"/><circle cx="14.2" cy="15.5" r="4.3" fill="#3b3b3b"/><path d="M12.4 13.7 L16 17.3 M16 13.7 L12.4 17.3" stroke="#f8f8f8" stroke-width="1.2"/></svg>
<div class="t" style="left:1684px;top:1006.43px;font-size:15.5px;color:#3b3b3b;font-family:'Liberation Sans', sans-serif;">JSON</div>
<div class="r" style="left:1737px;top:1009px;width:134px;height:29px;background:#c6c8cc;"></div>
<svg class="s" style="left:1748px;top:1013px;" width="23" height="22" viewBox="0 0 23 22"><path d="M4.5 14 Q1 14 1 10.5 V8 Q1 3 4.5 2 Q7.5 0.8 11.5 2.2 Q15.5 0.8 18.5 2 Q22 3.2 22 8" stroke="#3b3b3b" stroke-width="1.5" fill="none"/><circle cx="8" cy="7" r="3.4" stroke="#3b3b3b" stroke-width="1.5" fill="none"/><circle cx="15" cy="7" r="3.4" stroke="#3b3b3b" stroke-width="1.5" fill="none"/><path d="M1 11 V15 Q1 19 6 21" stroke="#3b3b3b" stroke-width="1.5" fill="none"/><circle cx="15.8" cy="15" r="5.9" stroke="#3b3b3b" stroke-width="1.5" fill="none"/><path d="M13.4 12.6 L18.2 17.4 M18.2 12.6 L13.4 17.4" stroke="#3b3b3b" stroke-width="1.5"/></svg>
<div class="t" style="left:1776px;top:1005.91px;font-size:17px;color:#3b3b3b;font-family:'Liberation Sans', sans-serif;">Signed out</div>
<svg class="s" style="left:1884.5px;top:1013px;" width="19" height="22" viewBox="0 0 19 22"><path d="M9.5 1.5 Q3.2 1.5 3.2 8.5 V14 L1 17.2 H18 L15.8 14 V8.5 Q15.8 1.5 9.5 1.5Z" stroke="#3b3b3b" stroke-width="1.5" fill="none" stroke-linejoin="round"/><path d="M7 18.5 Q9.5 21.5 12 18.5" stroke="#3b3b3b" stroke-width="1.5" fill="none"/></svg>
</body></html>
